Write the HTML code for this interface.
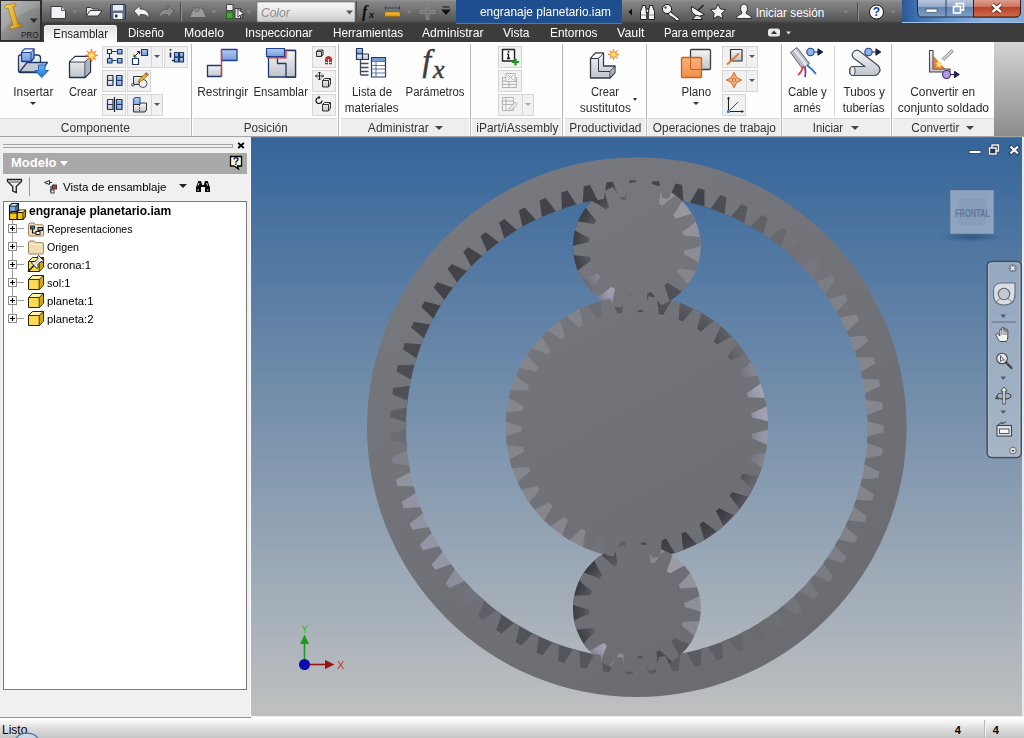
<!DOCTYPE html>
<html lang="es">
<head>
<meta charset="utf-8">
<title>engranaje planetario.iam</title>
<style>
*{box-sizing:border-box;margin:0;padding:0}
html,body{width:1024px;height:738px;overflow:hidden;background:#f0f0f0}
body{position:relative;font-family:"Liberation Sans",sans-serif;font-size:12px;color:#2b2b2b}
.abs{position:absolute}
#titlebar{position:absolute;left:0;top:0;width:1024px;height:24px;background:linear-gradient(#959595 0,#848484 8%,#727272 42%,#656565 60%,#585858 86%,#444 94%,#3b3b3b 100%)}
#tabbar{position:absolute;left:0;top:24px;width:1024px;height:18px;background:#3c3c3c}
#appbtn{position:absolute;left:0;top:0;width:42px;height:41px;background:linear-gradient(#9a9a9a,#7b7b7b 50%,#5c5c5c);border-right:1px solid #2e2e2e;border-bottom:1px solid #2e2e2e}
#doc-title{position:absolute;left:456px;top:0;width:166px;height:24px;background:#1f4e8e;color:#fff;font-size:12px;line-height:24px;padding-left:24px;white-space:nowrap;border-bottom:1px solid #4a78b8}
#winframe{position:absolute;left:902px;top:0;width:122px;height:23px;background:linear-gradient(90deg,#2a5a96,#3f70ad 12%,#6a97cd 40%,#8db3e0 70%,#84abd9);border-bottom:1px solid #9cc0e8}
.tab{position:absolute;top:24px;height:18px;line-height:18px;color:#fff;font-size:12px;white-space:nowrap}
.tab.on{top:25px;height:17px;line-height:16px;background:linear-gradient(#dedede,#f4f4f4 60%,#fefefe);color:#222;border:1px solid #f6f6f6;border-bottom:0;border-radius:3px 3px 0 0;text-align:center}
#ribbon{position:absolute;left:0;top:42px;width:994px;height:94px;background:#fefefe}
#ribbon-r{position:absolute;left:994px;top:42px;width:30px;height:94px;background:linear-gradient(#d3d3d3,#b0b0b0 50%,#8c8c8c)}
.plabel{position:absolute;top:118px;height:18px;background:#eeeeee;border-top:1px solid #d9d9d9;text-align:center;font-size:12px;line-height:17px;padding-top:1px;color:#333;white-space:nowrap}
.psep{position:absolute;top:44px;width:3px;height:92px;background:#b9b9b9;border-left:1px solid #fdfdfd;border-right:1px solid #fdfdfd}
.btxt{position:absolute;margin-top:1px;font-size:12px;line-height:16px;text-align:center;white-space:nowrap;color:#2b2b2b}
.sbtn{position:absolute;width:24px;height:22px;border:1px solid #d6d6d6;background:#f1f1f1}
.dd{position:absolute;width:0;height:0;border-left:3px solid transparent;border-right:3px solid transparent;border-top:3.500px solid #333}
#ribline{position:absolute;left:0;top:136px;width:1024px;height:1px;background:#a4a4a4}
#left{position:absolute;left:0;top:137px;width:251px;height:579px;background:#f0f0f0;border-right:1px solid #fbfbfb}
#viewport{position:absolute;left:251px;top:137px;width:773px;height:579px;background:linear-gradient(#35659a 0%,#bfc0c0 100%);overflow:hidden}
#status{position:absolute;left:0;top:716.500px;width:1024px;height:21.500px;background:linear-gradient(#ffffff,#f4f4f4 20%,#dcdcdc 55%,#c6c6c6);border-top:1px solid #fff}
#tree{position:absolute;left:3px;top:201px;width:244px;height:489px;background:#fff;border:1px solid #7a7a7a}
#modelbar{position:absolute;left:3px;top:153px;width:244px;height:20.500px;background:#a9a9a9;color:#fff;font-weight:bold;font-size:13px;line-height:20px;padding-left:8px}
.trow{position:absolute;left:0;height:18px;line-height:18px;font-size:11.5px;color:#000;white-space:nowrap}
.tc{display:inline-block;transform:scaleX(.98);transform-origin:50% 50%}
.tl{display:inline-block;transform:scaleX(.98);transform-origin:0 50%}
</style>
</head>
<body>
<div id="titlebar"></div>
<div id="tabbar"></div>
<div id="doc-title"><span class="tl" style="transform:scaleX(0.992)">engranaje planetario.iam</span></div>
<div id="winframe"></div>
<div id="appbtn"></div>
<div class="tab on" style="left:44px;width:73px"><span class="tc" style="transform:scaleX(0.954)">Ensamblar</span></div>
<div class="tab" style="left:128px"><span class="tl" style="transform:scaleX(0.964)">Diseño</span></div>
<div class="tab" style="left:184px"><span class="tl" style="transform:scaleX(1.019)">Modelo</span></div>
<div class="tab" style="left:245px"><span class="tl" style="transform:scaleX(0.992)">Inspeccionar</span></div>
<div class="tab" style="left:332.500px"><span class="tl" style="transform:scaleX(0.972)">Herramientas</span></div>
<div class="tab" style="left:422px"><span class="tl" style="transform:scaleX(1.013)">Administrar</span></div>
<div class="tab" style="left:503px"><span class="tl" style="transform:scaleX(1.001)">Vista</span></div>
<div class="tab" style="left:550px"><span class="tl" style="transform:scaleX(0.989)">Entornos</span></div>
<div class="tab" style="left:617px"><span class="tl" style="transform:scaleX(1.039)">Vault</span></div>
<div class="tab" style="left:664px"><span class="tl" style="transform:scaleX(0.945)">Para empezar</span></div>
<div id="ribbon"></div>
<div id="ribbon-r"></div>
<div id="ribline"></div>
<div id="left"></div>
<div id="modelbar">Modelo</div>
<div id="tree"></div>
<div id="status"></div>
<!-- app button contents -->
<svg class="abs" style="left:0;top:0" width="42" height="42" viewBox="0 0 42 42">
<defs><linearGradient id="abg" x1="0" y1="0" x2="1" y2="1"><stop offset="0" stop-color="#b4b4b4"/><stop offset=".5" stop-color="#8c8c8c"/><stop offset="1" stop-color="#666"/></linearGradient>
<linearGradient id="gold" x1="0" y1="0" x2="1" y2="0"><stop offset="0" stop-color="#f7d25a"/><stop offset=".55" stop-color="#eab52c"/><stop offset="1" stop-color="#b77d10"/></linearGradient></defs>
<rect x="0" y="0" width="41" height="41" fill="#2c2c2c"/>
<rect x="1" y="1" width="39" height="39" fill="url(#abg)"/>
<path d="M1 1h39v6q-22 4-39 26z" fill="#fff" opacity=".13"/>
<path d="M4.500 5.500l11-2.500.8 2.800-3.200.9 5 17.500 3.300-.7.800 2.900-11.500 2.700-.8-2.900 3.300-.8-5-17.400-3 .7z" fill="url(#gold)" stroke="#8a5f0c" stroke-width=".5"/>
<path d="M30 18.500h7.500l-3.750 4.500z" fill="#2b2b2b"/>
<text x="21" y="38.300" font-family="Liberation Sans,sans-serif" font-size="9.500" fill="#1c1c1c" textLength="17.500" lengthAdjust="spacingAndGlyphs">PRO</text>
</svg>
<!-- QAT icons -->
<svg class="abs" style="left:42px;top:0" width="414" height="24" viewBox="42 0 414 24">
<defs><linearGradient id="ddg" x1="0" y1="0" x2="0" y2="1"><stop offset="0" stop-color="#f6f6f6"/><stop offset=".45" stop-color="#e8e8e8"/><stop offset="1" stop-color="#c9c9c9"/></linearGradient></defs>
<!-- new -->
<path d="M51 6.500h10.500l4 4v8h-14.500z" fill="#f2f2f6" stroke="#3a3a3a" stroke-width="1"/><path d="M61.500 6.500v4h4" fill="#d8d8de" stroke="#3a3a3a" stroke-width=".8"/>
<path d="M72.500 10.500h5l-2.500 3z" fill="#858585"/>
<!-- open -->
<path d="M86.500 15.500v-8h4.500l1.500 1.500h6v2" fill="#e8e8ec" stroke="#3a3a3a" stroke-width="1"/><path d="M86.500 16l3.500-5.500h12l-4 5.500z" fill="#f4f4f7" stroke="#3a3a3a" stroke-width="1"/>
<!-- save -->
<rect x="110.500" y="4.500" width="15" height="14.500" rx="1" fill="#5d6d86" stroke="#2c3442" stroke-width="1"/><rect x="113" y="5" width="10" height="5.500" fill="#e9edf3"/><rect x="113.500" y="13" width="9" height="6" fill="#f4f4f4"/><rect x="115" y="14.500" width="2.500" height="3" fill="#2c3442"/>
<!-- undo -->
<path d="M134 11l6-5.500v3.500q9-.5 9.500 9.500q-2.500-4.500-9.500-4v3.500z" fill="#f2f2f2" stroke="#3a3a3a" stroke-width=".8" stroke-linejoin="round"/>
<!-- redo -->
<path d="M174 11l-6-5.500v3.500q-9-.5-9.500 9.500q2.500-4.500 9.500-4v3.500z" fill="#8a8a8a" stroke="#555" stroke-width=".8" stroke-linejoin="round"/>
<path d="M180.500 2v20" stroke="#4a4a4a"/><path d="M181.500 2v20" stroke="#8c8c8c"/>
<!-- return (gray) -->
<path d="M189.500 17.500l4-9.500h9l4 9.500z" fill="#9a9a9a" stroke="#5a5a5a"/><path d="M192 7l5 5 6-7" fill="none" stroke="#777" stroke-width="1.500"/>
<path d="M211.500 10.500h5l-2.500 3z" fill="#858585"/>
<!-- update -->
<rect x="226.500" y="4.500" width="6.500" height="6" fill="#e8e8e8" stroke="#444"/><rect x="226.500" y="12" width="6.500" height="6.500" fill="#49a53a" stroke="#2c5f22"/><rect x="235" y="8.500" width="5.500" height="10" fill="#d8d8d8" stroke="#444"/><path d="M238 9l0 8 2-2 1.500 3 1.200-.6-1.500-2.900 2.800-.2z" fill="#fff" stroke="#111" stroke-width=".7"/>
<path d="M246 10.500h5l-2.500 3z" fill="#858585"/>
<!-- color combobox -->
<rect x="257" y="2" width="98" height="20" rx="1" fill="url(#ddg)" stroke="#6a6a6a" stroke-width=".6"/>
<text x="261" y="17" font-family="Liberation Sans,sans-serif" font-size="12" font-style="italic" fill="#8c8c8c">Color</text>
<path d="M346 10.500h7l-3.500 4z" fill="#555"/>
<path d="M356.500 1v22" stroke="#4c4c4c"/>
<!-- fx -->
<text x="362" y="17" font-family="Liberation Serif,serif" font-size="16" font-style="italic" font-weight="bold" fill="#0a0a0a">f</text><text x="369" y="18" font-family="Liberation Serif,serif" font-size="10" font-style="italic" font-weight="bold" fill="#0a0a0a">x</text>
<!-- measure -->
<path d="M385 8h15M385.500 6v4M399.500 6v4" stroke="#36455f" stroke-width="1"/><rect x="385" y="12" width="15" height="4.500" fill="#f0b429" stroke="#8a6a10" stroke-width=".6"/><path d="M387 14.500v2M389 14.500v2M391 14.500v2M393 14.500v2M395 14.500v2M397 14.500v2" stroke="#7a5a10" stroke-width=".5"/>
<path d="M406.500 10.500h5l-2.500 3z" fill="#858585"/>
<path d="M426 4.500h3v6h6v3h-6v6h-3v-6h-6v-3h6z" fill="#777" stroke="#8e8e8e" stroke-width=".8"/>
<path d="M442.500 7h7M442.500 10h7l-3.500 4z" fill="#111" stroke="#111" stroke-width="1.200"/>
</svg>
<!-- right info center -->
<svg class="abs" style="left:622px;top:0" width="278" height="24" viewBox="622 0 278 24">
<path d="M632 8.500v7l-3.500-3.500z" fill="#111"/>
<!-- binoculars -->
<g fill="#f2f2f2" stroke="#1c1c1c" stroke-width="1" stroke-linejoin="round"><path d="M640.500 19.500v-8l1.700-4.500v-1.500h3.300v1.500l1.200 3.500v9z"/><path d="M654.500 19.500v-8l-1.700-4.500v-1.500h-3.300v1.500l-1.200 3.500v9z"/><rect x="646.200" y="9" width="2.600" height="3.500"/><path d="M640.500 15h6.200M648.300 15h6.200" stroke="#777" stroke-width=".8"/></g>
<!-- key -->
<path d="M670 11.500l9.300 7.300-.6 2-2.800-.3-1-1.800-1.600.2-.6-1.800-1.700-.2-2.800-3z" fill="#f2f2f2" stroke="#1c1c1c" stroke-width="1" stroke-linejoin="round"/><circle cx="667" cy="9" r="4.600" fill="#f2f2f2" stroke="#1c1c1c" stroke-width="1"/><circle cx="665.500" cy="7.500" r="1.300" fill="#555"/>
<!-- dish -->
<path d="M696.500 14.500l-4 5h10l-3.500-5z" fill="#e8e8e8" stroke="#1c1c1c" stroke-width="1" stroke-linejoin="round"/><path d="M691.500 6.500q-1 6 3.500 8.500t9.500-.5z" fill="#f4f4f4" stroke="#1c1c1c" stroke-width="1" stroke-linejoin="round"/><path d="M698 10.500l5.500-5.500" stroke="#1c1c1c" stroke-width="1.400"/>
<!-- star -->
<path d="M718 4l2.300 5 5.400.6-4 3.700 1.100 5.400-4.800-2.700-4.800 2.700 1.100-5.400-4-3.700 5.400-.6z" fill="#f4f4f4" stroke="#222" stroke-width=".9" stroke-linejoin="round"/>
<!-- user -->
<path d="M744 4q3.500 0 3.500 4q0 3-1.500 4.500q0 1.500 2 2q3.500 1 3.500 4h-15q0-3 3.500-4q2-.5 2-2q-1.500-1.500-1.500-4.500q0-4 3.500-4z" fill="#f4f4f4" stroke="#222" stroke-width=".9"/>
<text x="755.700" y="17" font-family="Liberation Sans,sans-serif" font-size="12" fill="#fff" textLength="68.500" lengthAdjust="spacingAndGlyphs">Iniciar sesión</text>
<path d="M843.500 10.500h5l-2.500 3z" fill="#858585"/>
<path d="M857.500 3v18" stroke="#4a4a4a"/><path d="M858.500 3v18" stroke="#8c8c8c"/>
<circle cx="876.500" cy="12" r="7" fill="#f6f6f6" stroke="#1a1a1a" stroke-width="1"/>
<text x="876.500" y="16.300" font-family="Liberation Sans,sans-serif" font-size="12" font-weight="bold" fill="#1d3f9e" text-anchor="middle">?</text>
<path d="M891 10.500h5l-2.500 3z" fill="#858585"/>
</svg>
<!-- window buttons -->
<svg class="abs" style="left:900px;top:0" width="124" height="24" viewBox="900 0 124 24">
<defs><linearGradient id="wb" x1="0" y1="0" x2="0" y2="1"><stop offset="0" stop-color="#c3d0e2"/><stop offset=".45" stop-color="#93a9c8"/><stop offset=".5" stop-color="#6584ae"/><stop offset="1" stop-color="#7f9fc8"/></linearGradient>
<linearGradient id="wc" x1="0" y1="0" x2="0" y2="1"><stop offset="0" stop-color="#e3ab9d"/><stop offset=".45" stop-color="#cf735d"/><stop offset=".5" stop-color="#bb422c"/><stop offset="1" stop-color="#cf6c4c"/></linearGradient></defs>
<path d="M917.500 -2h103v14q0 5-5 5h-93q-5 0-5-5z" fill="url(#wb)" stroke="#1e2f4a" stroke-width="1"/>
<path d="M973.500 -2h47v14q0 5-5 5h-42z" fill="url(#wc)" stroke="#3a1a12" stroke-width="1"/>
<path d="M946 0v17" stroke="#2c405e"/>
<rect x="926" y="9" width="11" height="3.500" fill="#fff" stroke="#3a4a62" stroke-width=".7"/>
<rect x="956.500" y="3.500" width="7" height="6.500" fill="none" stroke="#fff" stroke-width="1.600"/><rect x="953.500" y="6.500" width="7" height="6.500" fill="#7f9cc5" stroke="#fff" stroke-width="1.600"/>
<path d="M992.500 4.500l8.500 7.500M1001 4.500l-8.500 7.500" stroke="#3a1a12" stroke-width="4"/><path d="M992.500 4.500l8.500 7.500M1001 4.500l-8.500 7.500" stroke="#fff" stroke-width="2.400"/>
</svg>
<!-- tab-bar end widget -->
<svg class="abs" style="left:766px;top:26px" width="30" height="14" viewBox="0 0 30 14"><rect x="2" y="2.500" width="12" height="8" rx="2.500" fill="#e6e6e6"/><path d="M5 8h6l-3-3.500z" fill="#333"/><path d="M20 5.500h5l-2.500 3z" fill="#ddd"/></svg>
<!-- ribbon panels -->
<div class="plabel" style="left:0;width:190px"><span class="tc" style="transform:scaleX(1.004)">Componente</span></div>
<div class="plabel" style="left:193px;width:145px"><span class="tc" style="transform:scaleX(0.970)">Posición</span></div>
<div class="plabel" style="left:341px;width:128px"><span style="margin-right:14px"><span class="tc" style="transform:scaleX(1.005)">Administrar</span></span><i class="dd" style="left:93.500px;top:7px;border-width:4.500px 4px 0;border-top-color:#444"></i></div>
<div class="plabel" style="left:472px;width:90px"><span class="tc" style="transform:scaleX(0.992)">iPart/iAssembly</span></div>
<div class="plabel" style="left:565px;width:80px"><span class="tc" style="transform:scaleX(0.990)">Productividad</span></div>
<div class="plabel" style="left:648px;width:132px"><span class="tc" style="transform:scaleX(0.986)">Operaciones de trabajo</span></div>
<div class="plabel" style="left:783px;width:107px"><span style="margin-right:16px"><span class="tc" style="transform:scaleX(0.946)">Iniciar</span></span><i class="dd" style="left:68px;top:7px;border-width:4.500px 4px 0;border-top-color:#444"></i></div>
<div class="plabel" style="left:893px;width:101px"><span style="margin-right:16px"><span class="tc" style="transform:scaleX(0.986)">Convertir</span></span><i class="dd" style="left:73px;top:7px;border-width:4.500px 4px 0;border-top-color:#444"></i></div>
<div class="psep" style="left:190px"></div>
<div class="psep" style="left:337px"></div>
<div class="psep" style="left:469px"></div>
<div class="psep" style="left:561px"></div>
<div class="psep" style="left:645px"></div>
<div class="psep" style="left:780px"></div>
<div class="psep" style="left:890px"></div>
<div class="abs" style="left:834px;top:46px;width:1px;height:70px;background:#d6d6d6"></div>

<!-- big button captions -->
<div class="btxt" style="left:3px;top:83px;width:60px"><span class="tc" style="transform:scaleX(0.983)">Insertar</span></div><i class="dd" style="left:30px;top:102px"></i>
<div class="btxt" style="left:53px;top:83px;width:60px"><span class="tc" style="transform:scaleX(0.933)">Crear</span></div>
<div class="btxt" style="left:193px;top:83px;width:60px"><span class="tc" style="transform:scaleX(0.993)">Restringir</span></div>
<div class="btxt" style="left:251px;top:83px;width:60px"><span class="tc" style="transform:scaleX(0.950)">Ensamblar</span></div>
<div class="btxt" style="left:341px;top:83px;width:62px"><span class="tc" style="transform:scaleX(0.952)">Lista de</span><br><span class="tc" style="transform:scaleX(0.972)">materiales</span></div>
<div class="btxt" style="left:400px;top:83px;width:70px"><span class="tc" style="transform:scaleX(0.951)">Parámetros</span></div>
<div class="btxt" style="left:570px;top:83px;width:70px"><span class="tc" style="transform:scaleX(0.933)">Crear</span><br><span class="tc" style="transform:scaleX(1.010)">sustitutos</span></div><i class="dd" style="left:633px;top:98px;border-width:3px 2.5px 0"></i>
<div class="btxt" style="left:661px;top:83px;width:70px"><span class="tc" style="transform:scaleX(0.967)">Plano</span></div><i class="dd" style="left:693px;top:102px"></i>
<div class="btxt" style="left:777px;top:83px;width:60px"><span class="tc" style="transform:scaleX(0.946)">Cable y</span><br><span class="tc" style="transform:scaleX(0.916)">arnés</span></div>
<div class="btxt" style="left:834px;top:83px;width:60px"><span class="tc" style="transform:scaleX(0.978)">Tubos y</span><br><span class="tc" style="transform:scaleX(0.964)">tuberías</span></div>
<div class="btxt" style="left:893px;top:83px;width:100px"><span class="tc" style="transform:scaleX(0.994)">Convertir en</span><br><span class="tc" style="transform:scaleX(1.008)">conjunto soldado</span></div>

<!-- small buttons -->
<div class="sbtn" style="left:102px;top:46px;width:24px"></div>
<div class="sbtn" style="left:127px;top:46px;width:36px"></div><div class="abs" style="left:151px;top:47px;width:1px;height:20px;background:#d6d6d6"></div><i class="dd" style="left:154px;top:55px;border-width:3.500px 3px 0;border-top-color:#555"></i>
<div class="sbtn" style="left:164px;top:46px;width:24px"></div>
<div class="sbtn" style="left:102px;top:70px;width:24px"></div>
<div class="sbtn" style="left:127px;top:70px;width:24px"></div>
<div class="sbtn" style="left:102px;top:94px;width:24px"></div>
<div class="sbtn" style="left:127px;top:94px;width:36px"></div><div class="abs" style="left:151px;top:95px;width:1px;height:20px;background:#d6d6d6"></div><i class="dd" style="left:154px;top:103px;border-width:3.500px 3px 0;border-top-color:#555"></i>
<div class="sbtn" style="left:312px;top:46px;width:24px"></div>
<div class="sbtn" style="left:312px;top:70px;width:24px"></div>
<div class="sbtn" style="left:312px;top:94px;width:24px"></div>
<div class="sbtn" style="left:498px;top:46px;width:24px"></div>
<div class="sbtn" style="left:498px;top:70px;width:24px"></div>
<div class="sbtn" style="left:498px;top:94px;width:36px"></div><div class="abs" style="left:522px;top:95px;width:1px;height:20px;background:#d6d6d6"></div><i class="dd" style="left:525px;top:103px;border-width:3.500px 3px 0;border-top-color:#aaa"></i>
<div class="sbtn" style="left:722px;top:46px;width:36px"></div><div class="abs" style="left:746px;top:47px;width:1px;height:20px;background:#d6d6d6"></div><i class="dd" style="left:749px;top:55px;border-width:3.500px 3px 0;border-top-color:#555"></i>
<div class="sbtn" style="left:722px;top:70px;width:36px"></div><div class="abs" style="left:746px;top:71px;width:1px;height:20px;background:#d6d6d6"></div><i class="dd" style="left:749px;top:79px;border-width:3.500px 3px 0;border-top-color:#555"></i>
<div class="sbtn" style="left:722px;top:94px;width:24px"></div>
<svg class="abs" style="left:0;top:42px" width="994" height="78" viewBox="0 42 994 78">
<defs>
<linearGradient id="gb" x1="0" y1="0" x2="0" y2="1"><stop offset="0" stop-color="#b5cdf0"/><stop offset="1" stop-color="#6f9bdc"/></linearGradient>
<linearGradient id="gg" x1="0" y1="0" x2="0" y2="1"><stop offset="0" stop-color="#f6f6f7"/><stop offset="1" stop-color="#bfc3ca"/></linearGradient>
<linearGradient id="go" x1="0" y1="0" x2="0" y2="1"><stop offset="0" stop-color="#fbb27c"/><stop offset="1" stop-color="#f3904a"/></linearGradient>
<linearGradient id="gbl" x1="0" y1="0" x2="0" y2="1"><stop offset="0" stop-color="#6db3f5"/><stop offset="1" stop-color="#1f6fd6"/></linearGradient>
<radialGradient id="gst"><stop offset="0" stop-color="#fff7a0"/><stop offset=".45" stop-color="#ffc93a"/><stop offset="1" stop-color="#e8601a"/></radialGradient>
<g id="star"><path d="M0-6.500L1.300-2.600 4.600-4.600 2.600-1.300 6.500 0 2.600 1.300 4.600 4.600 1.300 2.600 0 6.500-1.300 2.600-4.600 4.600-2.600 1.300-6.500 0-2.600-1.300-4.600-4.600-1.300-2.600z" fill="url(#gst)" stroke="#e0641c" stroke-width=".5"/></g>
</defs>
<g stroke-linejoin="round">
<!-- Insertar -->
<path d="M18.500 57q0-2 2-2h17q3 0 3 3v12.500q0 2-2 2h-18q-2 0-2-2z" fill="url(#gg)" stroke="#1f3864" stroke-width="1.300"/>
<path d="M19.500 72l7.500-9.500h20.500l-6.500 9.500z" fill="#c3c7cf" stroke="#1f3864" stroke-width="1.300"/>
<path d="M21.500 52.500l3-3.500h9.500v9l-3 3.500h-9.500z" fill="url(#gb)" stroke="#1f3f8f" stroke-width="1.300"/><path d="M21.500 52.500h9.500l3-3.500M31 52.500v9" fill="none" stroke="#1f3f8f" stroke-width="1"/><path d="M22.300 52l2.400-2.500h8.300l-2.300 2.500z" fill="#e3ecfa"/>
<path d="M38.500 65h6.500v5.500h3.500l-6.700 7-6.800-7h3.500z" fill="url(#gbl)" stroke="#1a5cc0" stroke-width=".9"/>
<!-- Crear -->
<path d="M69.500 62l5.500-5.500h15.500v15.500l-5.500 5.500h-15.500z" fill="url(#gg)" stroke="#1f2f4f" stroke-width="1.300"/><path d="M69.500 62h15.500l5.500-5.500M85 62v15.500" fill="none" stroke="#1f2f4f" stroke-width="1"/><path d="M70.500 61.300l4.800-4.200h13.700l-4.500 4.200z" fill="#fdfdfd"/><path d="M85.700 62.300l4.200-4.300v13.700l-4.200 4.300z" fill="#aeb3bd"/>
<use href="#star" x="91.500" y="55.500"/>
<!-- small component icons -->
<g fill="url(#gb)" stroke="#1f3864" stroke-width="1.200">
<path d="M111.500 51.500h5M111.500 60.500h5M109.500 54v4" fill="none"/>
<rect x="107.500" y="49.500" width="4" height="4" fill="#fff"/><rect x="117.500" y="49.500" width="4.500" height="4.500"/><rect x="107.500" y="58.500" width="4.500" height="4.500"/><rect x="117.500" y="58.500" width="4.500" height="4.500"/>
<rect x="141.500" y="49.500" width="6" height="6"/><rect x="132.500" y="58.500" width="6" height="6" fill="#fff"/>
<path d="M134 57l5.500-5.500M134 54.500v2.500h2.500M137 51.500h2.500v2.500" fill="none" stroke="#222" stroke-width="1"/>
<rect x="174.500" y="52.500" width="4" height="4.500"/><rect x="179.500" y="52.500" width="4" height="4.500"/><rect x="174.500" y="57.500" width="4" height="4.500"/><rect x="179.500" y="57.500" width="4" height="4.500"/>
<path d="M170.500 52.500v5M172 60.500h2" fill="none" stroke="#14224a" stroke-width="1.600"/><rect x="169.700" y="49" width="1.600" height="1.600" fill="#14224a" stroke="none"/>
<!-- row2 -->
<rect x="107.500" y="75.500" width="5.500" height="5" fill="url(#gg)"/><rect x="107.500" y="80.500" width="5.500" height="5" fill="url(#gg)"/><rect x="116.500" y="75.500" width="5.500" height="5"/><rect x="116.500" y="80.500" width="5.500" height="5"/>
<path d="M133.500 76.500h9v8h-9z" fill="url(#gg)" stroke="#333" stroke-width="1"/><circle cx="143" cy="83.500" r="4" fill="#f2f2f2" stroke="#555" stroke-width="1"/><rect x="131.800" y="83.800" width="2.200" height="2.200" fill="#fff" stroke="#333" stroke-width=".8"/>
<path d="M138.500 82l1-3 6.500-6 2 2-6.500 6z" fill="#f0b429" stroke="#7a5a10" stroke-width=".7"/><path d="M145 73.500l1.500-1 2 2-1 1.500z" fill="#e27b58" stroke="#7a3a20" stroke-width=".5"/>
<!-- row3 -->
<path d="M107.500 99.500h5.500v5h-5.500zM107.500 104.500h5.500v5h-5.500z" fill="url(#gg)"/><path d="M114.500 97v15" stroke="#222" stroke-width="1.200"/><rect x="116.500" y="99.500" width="5.500" height="5"/><rect x="116.500" y="104.500" width="5.500" height="5"/>
<path d="M133.500 99.500l1.500-2h5l0 7.500-1.500 2h-5z" stroke="#2a5fb0"/><path d="M133.500 104.500h6.500l1-1.500h5.500v7l-1.500 2h-11.500z" fill="url(#gg)" stroke="#333" stroke-width="1"/><path d="M139.500 104.500v7" stroke="#333" stroke-dasharray="1.500 1" stroke-width=".9" fill="none"/>
</g>
<!-- Restringir -->
<rect x="207.500" y="65.500" width="14" height="11" fill="url(#gg)" stroke="#1f3864" stroke-width="1.300"/>
<rect x="221.500" y="49.500" width="15.500" height="11" fill="url(#gb)" stroke="#1f3f8f" stroke-width="1.300"/>
<path d="M221.500 49v28" stroke="#e03a3a" stroke-width="1.400"/>
<!-- Ensamblar -->
<path d="M268.500 50.500h27v26.500h-9.500v-13.500h-8.500v-7.500h-9z" fill="url(#gg)" stroke="#1f3864" stroke-width="1.300"/><path d="M268.500 50.500h27v26.500h-27z" fill="url(#gg)" stroke="#1f3864" stroke-width="1.300"/><path d="M277.500 56v7.500h8.500v13.500" fill="none" stroke="#1f3864" stroke-width="1.300"/>
<path d="M267 57.700h19v-8" fill="none" stroke="#e03a3a" stroke-width="1.500"/>
<rect x="266.500" y="48.500" width="18" height="8" fill="url(#gb)" stroke="#1f3f8f" stroke-width="1.200"/>
<!-- posicion small -->
<g stroke="#333" stroke-width="1" fill="url(#gg)">
<path d="M316.500 51.500l1.500-1.500h5v5l-1.500 1.500h-5zM316.500 51.500h5l1.500-1.500M321.500 51.500v5"/>
<path d="M325.500 64v-4.500q0-3 3-3t3 3v4.500h-2v-4.500q0-1-1-1t-1 1v4.500z" fill="#e02525" stroke="#8a1010" stroke-width=".7"/><path d="M325.500 62.500h2M329.500 62.500h2" stroke="#fff" stroke-width="1.200"/>
<path d="M322.500 80.500l2-2h6v6l-2 2.500h-6zM322.500 80.500h6l2-2M328.500 80.500v6.500"/>
<path d="M319.500 72v8M315.500 76h8M319.500 72l-1.500 1.500M319.500 72l1.500 1.500M319.500 80l-1.500-1.500M319.500 80l1.500-1.500M315.500 76l1.500-1.500M315.500 76l1.500 1.500M323.500 76l-1.500-1.500M323.500 76l-1.500 1.500" fill="none" stroke="#111" stroke-width=".9"/>
<path d="M322.500 104.500l2-2h6v6l-2 2.500h-6zM322.500 104.500h6l2-2M328.500 104.500v6.500"/>
<path d="M322 100.500a3 3 0 1 1-3-3" fill="none" stroke="#111" stroke-width="1.100"/><path d="M318.500 95.500l2 2-2 2z" fill="#111" stroke="none"/>
</g>
<!-- Lista de materiales -->
<g stroke="#1f3864" stroke-width="1.200">
<rect x="356.500" y="48.500" width="6" height="5.500" fill="url(#gb)"/><rect x="356.500" y="54" width="6" height="5.500" fill="url(#gg)"/><rect x="362.500" y="54" width="6" height="5.500" fill="url(#gg)"/>
<path d="M360.500 60v15M360.500 63.500h8M360.500 67.500h8M360.500 71.500h8M360.500 75h8" fill="none" stroke="#3a4a62" stroke-width="1.300"/>
<rect x="371.500" y="57.500" width="14" height="19.500" fill="#fff"/><rect x="372" y="58" width="13" height="3" fill="#7a9bd0" stroke="none"/>
<path d="M371.500 61.500h14M371.500 65.500h14M371.500 69h14M371.500 73h14M376 61.500v15.500" fill="none" stroke="#4a68a0" stroke-width=".9"/>
</g>
<!-- fx -->
<text x="422.500" y="71" font-family="Liberation Serif,serif" font-size="31" font-style="italic" fill="#3c3c3c" stroke="#3c3c3c" stroke-width=".55">f</text>
<text x="433" y="77.500" font-family="Liberation Serif,serif" font-size="26" font-style="italic" fill="#3c3c3c" stroke="#3c3c3c" stroke-width=".5">x</text>
<!-- iPart small -->
<rect x="502.500" y="49.500" width="12" height="11.500" fill="#fff" stroke="#222" stroke-width="1.400"/><path d="M508.500 54v4.500M507 58.500h3.200M507.200 54h1.300" stroke="#111" stroke-width="1.400" fill="none"/><rect x="507.700" y="51" width="1.600" height="1.600" fill="#111"/>
<path d="M512 62h7M515.500 58.500v7" stroke="#1e9a1e" stroke-width="2.200"/>
<g stroke="#b4b4b4" stroke-width="1" fill="#f4f4f4">
<rect x="502.500" y="77.500" width="14" height="10"/><path d="M502.500 81h14M502.500 84.500h14M509 81v6.500" fill="none"/><rect x="506" y="73.500" width="9" height="8"/><path d="M508 75l5 5M513 75l-5 5" fill="none"/>
<rect x="502.500" y="97.500" width="11" height="13"/><path d="M502.500 101h11M502.500 104.500h11M506 97.500v13" fill="none"/><path d="M508.500 111l1-3 6-6 2 2-6 6z" fill="#eee"/>
</g>
<!-- Crear sustitutos -->
<path d="M590.500 58.500l5-5.500h8v13h11.500v6.500l-5 5.500h-19.500z" fill="url(#gg)" stroke="#333b4a" stroke-width="1.300"/><path d="M590.500 58.500h8l5-5.500M598.500 58.500v13h11.500l5-5.500M610 71.500v6.500" fill="none" stroke="#333b4a" stroke-width="1"/><path d="M591.500 57.800l4.300-4h6.600l-4.200 4z" fill="#fff"/><path d="M610.700 72l3.800-4.300v4.600l-3.800 4.300z" fill="#a9aeb8"/>
<use href="#star" x="613.500" y="54.500" transform="translate(613.500 54.500) scale(.85) translate(-613.500 -54.500)"/>
<!-- Plano -->
<rect x="690.500" y="49.500" width="20" height="20" rx="1" fill="url(#gg)" stroke="#3a3a3a" stroke-width="1.300"/>
<rect x="681.500" y="57.500" width="20" height="20" rx="1" fill="url(#go)" stroke="#c2621e" stroke-width="1.300"/><path d="M690.500 58v11.500h11" fill="none" stroke="#c2621e" stroke-width="1"/>
<!-- ops small -->
<rect x="730.500" y="49.500" width="11.500" height="11.500" fill="url(#gg)" stroke="#333" stroke-width="1.200"/><path d="M727 64.500l12-11" stroke="#d9763a" stroke-width="1.800"/>
<path d="M734 72.500l2.500 5 5 2.500-5 2.500-2.500 5-2.500-5-5-2.500 5-2.500z" fill="#fbb27c" stroke="#d9763a" stroke-width="1.200"/><circle cx="734" cy="80" r="1.600" fill="#f7d0b0" stroke="#c2621e" stroke-width=".9"/>
<path d="M728.500 98v13.500h14" fill="none" stroke="#222" stroke-width="1.100"/><path d="M728.500 96.500l-1.500 2.500h3zM744 111.500l-2.500-1.500v3z" fill="#222"/><path d="M729 111l9-9" stroke="#444" stroke-width="1"/><rect x="727" y="110" width="3" height="3" fill="#3a8ae0"/>
<!-- Cable y arnés -->
<path d="M790.500 52.500l6.500-5 12.500 16-7 5z" fill="#b9bec8" stroke="#59616f" stroke-width="1"/><path d="M794.500 50l12 15.500" stroke="#eef0f4" stroke-width="2.200" opacity=".9"/>
<path d="M803 66q-1 6-5 9" fill="none" stroke="#e04545" stroke-width="1.800"/><path d="M805 67q1 6 0 10" fill="none" stroke="#6a3fb0" stroke-width="1.800"/><path d="M807 65q5 4 9 9" fill="none" stroke="#2a6fd0" stroke-width="1.800"/>
<circle cx="810.500" cy="52" r="3.700" fill="#8fb4e6" stroke="#1f3f8f" stroke-width="1.100"/><path d="M814.500 52h4.500M818 49l4.500 3-4.500 3z" fill="#14224a" stroke="#14224a" stroke-width="1.200"/>
<!-- Tubos -->
<path d="M853 52.500q3-4 7-1l18 14q4 4 0 8.500q-1.500 1.500-4 1.500h-21q-3.500-.5-3.500-4.500t3.500-4.500h12l-11-8q-3-3-1-6z" fill="url(#gg)" stroke="#444c5a" stroke-width="1.200"/><ellipse cx="852.500" cy="71" rx="2.600" ry="4.300" fill="#e9ebef" stroke="#444c5a" stroke-width="1"/>
<circle cx="868.500" cy="52" r="3.700" fill="#8fb4e6" stroke="#1f3f8f" stroke-width="1.100"/><path d="M872.500 52h4.500M876 49l4.500 3-4.500 3z" fill="#14224a" stroke="#14224a" stroke-width="1.200"/>
<!-- Convertir -->
<path d="M929.500 50.500h3.500v18.500h17v3h-20.500z" fill="url(#gg)" stroke="#444" stroke-width="1.100"/>
<path d="M933.500 56.500l11 12h-11z" fill="#f0783c" stroke="#c2501e" stroke-width=".6"/><path d="M938 60l1 2.500 2.500-1-1 2.500 2.500 1-2.500 1-.5 2.500-1.500-2-2.500.5 1-2.500-2-1.500 2.500-.5z" fill="#ffe27a"/>
<path d="M942 58.500l9.500-9 2 2-9.500 9z" fill="#c9cdd4" stroke="#777f8c" stroke-width=".8"/>
<circle cx="946.500" cy="74.500" r="4" fill="#b59ae0" stroke="#3f2f7a" stroke-width="1.100"/><path d="M950.500 74.500h5M954.500 71.500l4.500 3-4.500 3z" fill="#2a1f5a" stroke="#2a1f5a" stroke-width="1.200"/>
</g>
</svg>
<!-- browser panel -->
<div class="abs" style="left:3px;top:144px;width:230px;height:4px;border-top:1px solid #a4a4a4;border-bottom:1px solid #a4a4a4;border-right:1px solid #a4a4a4"></div>
<svg class="abs" style="left:237px;top:142px" width="8" height="7" viewBox="0 0 8 7"><path d="M1.2 1L6.8 6M6.800 1L1.2 6" stroke="#000" stroke-width="1.700"/></svg>
<i class="dd" style="left:60px;top:161px;border-width:5px 4.5px 0;border-top-color:#fff"></i>
<svg class="abs" style="left:229px;top:155px" width="14" height="15" viewBox="0 0 14 15"><path d="M1.5 1.5h11v9.5h-4l1 3-4.5-3h-3.5z" fill="#ffffd8" stroke="#000" stroke-width="1.3"/><text x="7" y="9.6" font-family="Liberation Sans,sans-serif" font-size="10.500" font-weight="bold" text-anchor="middle" fill="#0c0c5c">?</text></svg>
<!-- toolbar -->
<svg class="abs" style="left:6px;top:178px" width="18" height="17" viewBox="0 0 18 17"><path d="M1.5 1.5h14v2l-5.2 5v6l-3.6-1.5v-4.5l-5.2-5z" fill="#e8e8e8" stroke="#222" stroke-width="1.3"/><path d="M3 4h11" stroke="#555" stroke-width="1"/></svg>
<div class="abs" style="left:29px;top:177px;width:1px;height:19px;background:#9a9a9a"></div>
<svg class="abs" style="left:42px;top:178px" width="18" height="17" viewBox="0 0 18 17"><path d="M7.5 2.5l-5 2 5 2z" fill="#fff" stroke="#222" stroke-width="1"/><path d="M7 4.5h3" stroke="#222"/><path d="M9 8v6h2" fill="none" stroke="#222" stroke-width="1.2"/><rect x="10.5" y="7" width="4" height="4" fill="#c0392b" stroke="#222" stroke-width=".8"/><rect x="9" y="12" width="3" height="3" fill="#fff" stroke="#222" stroke-width=".8"/></svg>
<div class="abs" style="left:62.500px;top:179px;font-size:11.500px;line-height:16px;color:#000;white-space:nowrap"><span class="tl" style="transform:scaleX(1.001)">Vista de ensamblaje</span></div>
<i class="dd" style="left:179px;top:184px;border-width:4px 4px 0;border-top-color:#222"></i>
<svg class="abs" style="left:195px;top:179px" width="16" height="14" viewBox="0 0 16 14"><path d="M1 13v-4.500l2.300-6.500h2.700l1.200 4h1.600l1.200-4h2.700l2.300 6.500v4.500h-5v-5h-4v5z" fill="#0a0a0a"/><path d="M3 10.500v1.500M12.800 10.500v1.500M4 4l-.8 2.500M11.700 4l.8 2.500" stroke="#fff" stroke-width=".9"/></svg>
<!-- tree -->
<div class="abs" style="left:12px;top:220px;width:1px;height:99px;background:#9c9c9c"></div>
<svg class="abs" style="left:7px;top:202px" width="20" height="19" viewBox="7 202 20 19" stroke-linejoin="round"><path d="M9.500 206l2.500-2.500h6.500v6.500l-2.500 2.500h-6.500z" fill="#7fa6dc" stroke="#111" stroke-width="1.100"/><path d="M9.500 206h6.500l2.500-2.500M16 206v6.500" fill="none" stroke="#111" stroke-width="1"/><path d="M10.300 205.500l2-1.600h5l-1.800 1.600z" fill="#e8f0fb"/><path d="M16.600 206.300l1.500-1.500v4.800l-1.500 1.600z" fill="#3e68a8"/><path d="M17 212.500l2.500-2.500h6v6.500l-2.500 3h-6z" fill="#f5c518" stroke="#111" stroke-width="1.100"/><path d="M17 212.500h6l2.500-2.500M23 212.500v7" fill="none" stroke="#111" stroke-width="1"/><path d="M17.800 212l1.900-1.500h4.600l-1.700 1.500z" fill="#fff3a8"/><path d="M23.600 212.800l1.500-1.600v4.600l-1.500 1.800z" fill="#c99700"/><path d="M9.500 213l2-1.500h5.500v8h-7.500z" fill="#f5c518" stroke="#111" stroke-width="1.100"/><path d="M9.500 213h7.500" fill="none" stroke="#111" stroke-width="1"/></svg>
<div class="abs" style="left:28.500px;top:203px;font-size:12px;font-weight:bold;line-height:16px;color:#000;white-space:nowrap"><span class="tl" style="transform:scaleX(1.006)">engranaje planetario.iam</span></div>
<svg class="abs" style="left:8px;top:224px" width="17" height="9" viewBox="0 0 17 9"><rect x=".5" y=".5" width="8" height="8" fill="#fff" stroke="#8c8c8c"/><path d="M2 4.500h5M4.500 2v5" stroke="#000" stroke-width="1.200"/><path d="M9 4.500h7" stroke="#9c9c9c"/></svg>
<svg class="abs" style="left:27px;top:221px" width="18" height="16" viewBox="0 0 18 16"><path d="M1.500 3.800q0-1.800 1.800-1.800h3.700l1.500 1.700h6.500q1.500 0 1.500 1.500v8.600q0 1.200-1.200 1.200h-12.600q-1.200 0-1.200-1.200z" fill="#f2dcb2" stroke="#9a845e" stroke-width="1"/><path d="M2.500 5.200h13" stroke="#fbf1da" stroke-width="1"/><rect x="3.500" y="5" width="4" height="3" fill="#3b6fc0" stroke="#111" stroke-width=".8"/><path d="M5.500 8v4h3.500" fill="none" stroke="#111" stroke-width="1.100"/><rect x="9" y="10.500" width="4" height="3" fill="#fff" stroke="#111" stroke-width=".9"/><rect x="11" y="6.500" width="4.500" height="3" fill="#8fa6c8" stroke="#111" stroke-width=".9"/></svg>
<div class="abs" style="left:46.500px;top:221px;font-size:11px;line-height:16px;color:#000;white-space:nowrap"><span class="tl" style="transform:scaleX(0.965)">Representaciones</span></div>
<svg class="abs" style="left:8px;top:242px" width="17" height="9" viewBox="0 0 17 9"><rect x=".5" y=".5" width="8" height="8" fill="#fff" stroke="#8c8c8c"/><path d="M2 4.500h5M4.500 2v5" stroke="#000" stroke-width="1.200"/><path d="M9 4.500h7" stroke="#9c9c9c"/></svg>
<svg class="abs" style="left:27px;top:239px" width="18" height="16" viewBox="0 0 18 16"><path d="M1.500 3.800q0-1.800 1.800-1.800h3.700l1.500 1.700h6.500q1.500 0 1.500 1.500v8.600q0 1.200-1.200 1.200h-12.600q-1.200 0-1.200-1.200z" fill="#f2dcb2" stroke="#9a845e" stroke-width="1"/><path d="M2.500 5.200h13" stroke="#fbf1da" stroke-width="1"/></svg>
<div class="abs" style="left:46.500px;top:239px;font-size:11px;line-height:16px;color:#000;white-space:nowrap"><span class="tl" style="transform:scaleX(0.969)">Origen</span></div>
<svg class="abs" style="left:8px;top:260px" width="17" height="9" viewBox="0 0 17 9"><rect x=".5" y=".5" width="8" height="8" fill="#fff" stroke="#8c8c8c"/><path d="M2 4.500h5M4.500 2v5" stroke="#000" stroke-width="1.200"/><path d="M9 4.500h7" stroke="#9c9c9c"/></svg>
<svg class="abs" style="left:27px;top:256px" width="18" height="17" viewBox="0 0 18 17" stroke-linejoin="round"><path d="M1.500 5.500l4-4h11v9.500l-4 4.500h-11z" fill="#f7d038" stroke="#2a2200" stroke-width="1"/><path d="M2.200 6.200h9.600v8.600h-9.600z" fill="#fadb55"/><path d="M2.500 5l3.300-3h9.400l-3.100 3z" fill="#fff5b0"/><path d="M12.700 5.800l3.200-3.400v8.300l-3.200 3.700z" fill="#d9a400"/><path d="M1.500 5.500h10.700l4.300-4M12.200 5.500v10" fill="none" stroke="#2a2200" stroke-width=".9"/></svg>
<svg class="abs" style="left:27px;top:255px" width="18" height="18" viewBox="0 0 18 18" stroke-linejoin="round"><path d="M1 16.500l6-6" stroke="#111" stroke-width="1.200"/><path d="M4.500 8l5.500 5.500 1.500-1.800-.8-1.900 3.300-3.300 1.800.5 1.200-1.200-5.300-5.300-1.200 1.200.5 1.800-3.300 3.300-1.900-.6z" fill="#f6f6f6" stroke="#111" stroke-width="1"/><path d="M8 9.500l4-4" stroke="#aaa" stroke-width="1"/></svg>
<div class="abs" style="left:46.500px;top:257px;font-size:11px;line-height:16px;color:#000;white-space:nowrap"><span class="tl" style="transform:scaleX(1.028)">corona:1</span></div>
<svg class="abs" style="left:8px;top:278px" width="17" height="9" viewBox="0 0 17 9"><rect x=".5" y=".5" width="8" height="8" fill="#fff" stroke="#8c8c8c"/><path d="M2 4.500h5M4.500 2v5" stroke="#000" stroke-width="1.200"/><path d="M9 4.500h7" stroke="#9c9c9c"/></svg>
<svg class="abs" style="left:27px;top:274px" width="18" height="17" viewBox="0 0 18 17" stroke-linejoin="round"><path d="M1.500 5.500l4-4h11v9.500l-4 4.500h-11z" fill="#f7d038" stroke="#2a2200" stroke-width="1"/><path d="M2.200 6.200h9.600v8.600h-9.600z" fill="#fadb55"/><path d="M2.500 5l3.300-3h9.400l-3.100 3z" fill="#fff5b0"/><path d="M12.700 5.800l3.200-3.400v8.300l-3.200 3.700z" fill="#d9a400"/><path d="M1.500 5.500h10.700l4.300-4M12.200 5.500v10" fill="none" stroke="#2a2200" stroke-width=".9"/></svg>
<div class="abs" style="left:46.500px;top:275px;font-size:11px;line-height:16px;color:#000;white-space:nowrap"><span class="tl" style="transform:scaleX(1.011)">sol:1</span></div>
<svg class="abs" style="left:8px;top:296px" width="17" height="9" viewBox="0 0 17 9"><rect x=".5" y=".5" width="8" height="8" fill="#fff" stroke="#8c8c8c"/><path d="M2 4.500h5M4.500 2v5" stroke="#000" stroke-width="1.200"/><path d="M9 4.500h7" stroke="#9c9c9c"/></svg>
<svg class="abs" style="left:27px;top:292px" width="18" height="17" viewBox="0 0 18 17" stroke-linejoin="round"><path d="M1.500 5.500l4-4h11v9.500l-4 4.500h-11z" fill="#f7d038" stroke="#2a2200" stroke-width="1"/><path d="M2.200 6.200h9.600v8.600h-9.600z" fill="#fadb55"/><path d="M2.500 5l3.300-3h9.400l-3.100 3z" fill="#fff5b0"/><path d="M12.700 5.800l3.200-3.400v8.300l-3.200 3.700z" fill="#d9a400"/><path d="M1.500 5.500h10.700l4.300-4M12.200 5.500v10" fill="none" stroke="#2a2200" stroke-width=".9"/></svg>
<div class="abs" style="left:46.500px;top:293px;font-size:11px;line-height:16px;color:#000;white-space:nowrap"><span class="tl" style="transform:scaleX(1.027)">planeta:1</span></div>
<svg class="abs" style="left:8px;top:314px" width="17" height="9" viewBox="0 0 17 9"><rect x=".5" y=".5" width="8" height="8" fill="#fff" stroke="#8c8c8c"/><path d="M2 4.500h5M4.500 2v5" stroke="#000" stroke-width="1.200"/><path d="M9 4.500h7" stroke="#9c9c9c"/></svg>
<svg class="abs" style="left:27px;top:310px" width="18" height="17" viewBox="0 0 18 17" stroke-linejoin="round"><path d="M1.500 5.500l4-4h11v9.500l-4 4.500h-11z" fill="#f7d038" stroke="#2a2200" stroke-width="1"/><path d="M2.200 6.200h9.600v8.600h-9.600z" fill="#fadb55"/><path d="M2.500 5l3.300-3h9.400l-3.100 3z" fill="#fff5b0"/><path d="M12.700 5.800l3.200-3.400v8.300l-3.200 3.700z" fill="#d9a400"/><path d="M1.500 5.500h10.700l4.300-4M12.200 5.500v10" fill="none" stroke="#2a2200" stroke-width=".9"/></svg>
<div class="abs" style="left:46.500px;top:311px;font-size:11px;line-height:16px;color:#000;white-space:nowrap"><span class="tl" style="transform:scaleX(1.027)">planeta:2</span></div>
<div id="viewport"><div class="abs" style="left:0;top:0;width:773px;height:1px;background:#5f6c7e"></div>
<svg class="abs" style="left:0;top:0" width="773" height="579" viewBox="251 137 773 579">
<defs>
<linearGradient id="gface" gradientUnits="userSpaceOnUse" x1="500" y1="160" x2="790" y2="700">
<stop offset="0" stop-color="#78797e"/><stop offset="1" stop-color="#6a6b70"/>
</linearGradient>
<radialGradient id="shad"><stop offset="0" stop-color="#1d3c68" stop-opacity=".55"/><stop offset="1" stop-color="#1d3c68" stop-opacity="0"/></radialGradient>
<filter id="blur1" x="-20%" y="-20%" width="140%" height="140%"><feGaussianBlur stdDeviation="0.6"/></filter>
</defs>
<g shape-rendering="geometricPrecision">
<polygon points="643.9,179.1 649.9,179.4 656.0,179.8 662.0,180.3 668.0,181.0 665.8,198.3 660.2,197.7 654.6,197.2 649.0,196.8 643.4,196.6" fill="#424348"/>
<polygon points="667.1,180.9 673.1,181.7 679.1,182.6 685.0,183.8 691.0,185.0 687.2,202.1 681.6,200.9 676.1,199.9 670.5,199.0 664.9,198.2" fill="#424348"/>
<polygon points="690.0,184.8 695.9,186.2 701.8,187.7 707.6,189.3 713.4,191.1 708.0,207.8 702.6,206.1 697.2,204.5 691.7,203.1 686.3,201.9" fill="#424348"/>
<polygon points="712.5,190.8 718.2,192.8 723.9,194.8 729.6,197.0 735.2,199.4 728.3,215.4 723.1,213.2 717.8,211.2 712.5,209.3 707.1,207.5" fill="#4d4e53"/>
<polygon points="734.3,199.0 739.8,201.4 745.3,204.0 750.7,206.7 756.1,209.6 747.7,224.9 742.7,222.2 737.7,219.7 732.6,217.3 727.4,215.0" fill="#57585e"/>
<polygon points="755.2,209.1 760.5,212.1 765.7,215.1 770.9,218.4 776.0,221.7 766.2,236.2 761.4,233.1 756.7,230.1 751.8,227.2 746.9,224.5" fill="#616268"/>
<polygon points="775.1,221.1 780.1,224.6 785.0,228.1 789.9,231.8 794.6,235.6 783.5,249.1 779.1,245.6 774.6,242.2 770.0,238.9 765.4,235.7" fill="#68696f"/>
<polygon points="793.8,235.0 798.5,238.9 803.0,242.9 807.5,247.0 811.8,251.2 799.5,263.6 795.5,259.7 791.3,255.9 787.1,252.2 782.8,248.5" fill="#707177"/>
<polygon points="811.1,250.5 815.4,254.9 819.6,259.3 823.6,263.8 827.6,268.4 814.1,279.6 810.5,275.3 806.7,271.1 802.8,267.0 798.9,263.0" fill="#76777e"/>
<polygon points="826.9,267.7 830.8,272.3 834.5,277.1 838.1,282.0 841.6,287.0 827.2,296.8 823.9,292.2 820.6,287.7 817.1,283.3 813.5,278.9" fill="#7c7d83"/>
<polygon points="841.0,286.2 844.4,291.2 847.7,296.3 850.8,301.5 853.8,306.8 838.5,315.2 835.7,310.3 832.8,305.5 829.8,300.8 826.6,296.1" fill="#818289"/>
<polygon points="853.3,305.9 856.2,311.2 859.0,316.6 861.6,322.1 864.2,327.6 848.1,334.6 845.8,329.5 843.4,324.4 840.8,319.4 838.1,314.4" fill="#85868d"/>
<polygon points="863.8,326.7 866.1,332.3 868.4,337.9 870.5,343.6 872.5,349.3 855.9,354.8 854.1,349.5 852.1,344.2 850.0,339.0 847.8,333.8" fill="#85868d"/>
<polygon points="872.2,348.4 874.0,354.2 875.7,360.0 877.3,365.9 878.7,371.8 861.7,375.7 860.4,370.2 858.9,364.7 857.3,359.3 855.6,354.0" fill="#85868d"/>
<polygon points="878.5,370.8 879.8,376.7 881.0,382.7 882.0,388.7 882.9,394.7 865.6,397.0 864.7,391.4 863.8,385.8 862.7,380.3 861.5,374.8" fill="#86878e"/>
<polygon points="882.7,393.7 883.5,399.7 884.1,405.7 884.5,411.8 884.8,417.8 867.4,418.5 867.1,412.9 866.7,407.2 866.1,401.6 865.4,396.0" fill="#86878e"/>
<polygon points="884.8,416.9 885.0,422.9 885.0,429.0 884.9,435.0 884.6,441.1 867.2,440.1 867.4,434.5 867.5,428.9 867.5,423.2 867.3,417.6" fill="#86878e"/>
<polygon points="884.7,440.1 884.3,446.2 883.8,452.2 883.1,458.2 882.3,464.3 865.0,461.7 865.7,456.1 866.4,450.5 866.9,444.8 867.2,439.2" fill="#85868d"/>
<polygon points="882.4,463.3 881.4,469.3 880.3,475.2 879.1,481.2 877.7,487.1 860.7,482.9 862.0,477.4 863.2,471.9 864.2,466.3 865.1,460.7" fill="#85868c"/>
<polygon points="877.9,486.1 876.4,492.0 874.8,497.8 873.0,503.6 871.0,509.4 854.6,503.6 856.4,498.2 858.0,492.9 859.6,487.4 861.0,482.0" fill="#84858b"/>
<polygon points="871.4,508.4 869.3,514.1 867.1,519.8 864.8,525.4 862.3,531.0 846.4,523.6 848.7,518.5 850.9,513.3 852.9,508.0 854.9,502.7" fill="#83848a"/>
<polygon points="862.7,530.0 860.2,535.5 857.4,541.0 854.6,546.3 851.6,551.6 836.5,542.9 839.3,537.9 841.9,533.0 844.4,527.9 846.8,522.8" fill="#818288"/>
<polygon points="852.1,550.8 849.0,556.0 845.8,561.1 842.5,566.2 839.0,571.2 824.8,561.1 828.0,556.4 831.1,551.7 834.1,546.9 837.0,542.1" fill="#7e7f85"/>
<polygon points="839.6,570.4 836.1,575.3 832.4,580.1 828.6,584.8 824.7,589.5 811.4,578.1 815.1,573.8 818.6,569.4 822.0,564.9 825.3,560.3" fill="#7a7b81"/>
<polygon points="825.3,588.7 821.3,593.3 817.2,597.8 813.0,602.1 808.7,606.4 796.6,593.8 800.6,589.8 804.5,585.8 808.3,581.6 812.0,577.4" fill="#77787e"/>
<polygon points="809.4,605.7 805.0,609.8 800.4,613.9 795.8,617.8 791.1,621.7 780.3,608.0 784.6,604.4 788.9,600.8 793.1,597.0 797.2,593.1" fill="#73747a"/>
<polygon points="791.9,621.1 787.1,624.8 782.2,628.4 777.3,631.9 772.2,635.3 762.7,620.6 767.4,617.5 772.0,614.2 776.5,610.9 781.0,607.4" fill="#6e6f75"/>
<polygon points="773.1,634.7 768.0,638.0 762.8,641.1 757.5,644.2 752.2,647.0 744.0,631.6 749.0,628.9 753.9,626.1 758.7,623.2 763.5,620.1" fill="#696a70"/>
<polygon points="753.0,646.6 747.6,649.4 742.2,652.0 736.7,654.5 731.1,656.9 724.4,640.7 729.6,638.5 734.8,636.2 739.8,633.7 744.9,631.1" fill="#64656b"/>
<polygon points="732.0,656.5 726.4,658.8 720.7,660.9 714.9,662.9 709.2,664.7 704.1,648.0 709.4,646.3 714.8,644.4 720.1,642.5 725.3,640.4" fill="#5e5f65"/>
<polygon points="710.1,664.4 704.3,666.1 698.4,667.7 692.5,669.1 686.6,670.4 683.1,653.3 688.6,652.1 694.1,650.8 699.5,649.3 704.9,647.7" fill="#5b5c62"/>
<polygon points="687.6,670.2 681.6,671.4 675.6,672.4 669.6,673.3 663.6,674.0 661.7,656.6 667.3,656.0 672.9,655.2 678.5,654.2 684.0,653.1" fill="#5a5b61"/>
<polygon points="664.6,673.9 658.6,674.5 652.5,675.0 646.5,675.3 640.4,675.4 640.1,658.0 645.8,657.8 651.4,657.5 657.0,657.1 662.6,656.5" fill="#595a60"/>
<polygon points="641.4,675.4 635.3,675.5 629.2,675.4 623.2,675.1 617.1,674.7 618.5,657.3 624.1,657.7 629.8,657.9 635.4,658.0 641.1,658.0" fill="#58595f"/>
<polygon points="618.1,674.8 612.1,674.2 606.0,673.6 600.0,672.7 594.0,671.8 597.1,654.6 602.6,655.5 608.2,656.2 613.8,656.9 619.4,657.3" fill="#57585e"/>
<polygon points="595.0,671.9 589.1,670.8 583.1,669.6 577.2,668.2 571.3,666.7 575.9,649.8 581.4,651.3 586.9,652.5 592.4,653.7 598.0,654.7" fill="#56575d"/>
<polygon points="572.3,666.9 566.5,665.3 560.7,663.5 554.9,661.6 549.2,659.5 555.4,643.2 560.7,645.1 566.0,646.9 571.4,648.5 576.8,650.1" fill="#54555b"/>
<polygon points="550.1,659.9 544.5,657.7 538.9,655.3 533.3,652.9 527.8,650.3 535.5,634.6 540.6,637.0 545.8,639.3 551.0,641.4 556.2,643.5" fill="#53545a"/>
<polygon points="528.7,650.7 523.3,648.0 517.9,645.2 512.7,642.2 507.4,639.1 516.5,624.2 521.4,627.1 526.3,629.8 531.3,632.5 536.3,635.0" fill="#525359"/>
<polygon points="508.3,639.6 503.1,636.4 498.1,633.1 493.1,629.6 488.2,626.1 498.6,612.1 503.2,615.4 507.8,618.6 512.5,621.7 517.3,624.7" fill="#515258"/>
<polygon points="489.0,626.6 484.1,623.0 479.4,619.2 474.7,615.3 470.2,611.3 481.9,598.3 486.2,602.0 490.5,605.7 494.9,609.2 499.4,612.6" fill="#5f6067"/>
<polygon points="470.9,611.9 466.5,607.8 462.1,603.6 457.9,599.3 453.7,594.9 466.6,583.1 470.5,587.2 474.4,591.2 478.5,595.1 482.6,598.9" fill="#72737e"/>
<polygon points="454.4,595.6 450.3,591.1 446.4,586.5 442.5,581.8 438.8,577.0 452.8,566.4 456.2,570.9 459.8,575.3 463.4,579.5 467.2,583.7" fill="#8d8e9b"/>
<polygon points="439.4,577.8 435.8,572.9 432.3,567.9 428.9,562.9 425.7,557.8 440.5,548.6 443.6,553.3 446.7,558.0 449.9,562.6 453.3,567.2" fill="#9596a5"/>
<polygon points="426.2,558.6 423.0,553.4 420.0,548.2 417.1,542.8 414.4,537.4 430.0,529.7 432.6,534.7 435.3,539.7 438.1,544.5 441.0,549.4" fill="#9495a4"/>
<polygon points="414.8,538.3 412.2,532.9 409.6,527.3 407.3,521.8 405.0,516.1 421.3,509.9 423.4,515.1 425.6,520.3 428.0,525.4 430.4,530.5" fill="#9394a3"/>
<polygon points="405.4,517.0 403.3,511.4 401.3,505.6 399.4,499.8 397.7,494.0 414.6,489.3 416.1,494.7 417.9,500.1 419.7,505.4 421.7,510.7" fill="#9293a1"/>
<polygon points="398.0,495.0 396.4,489.1 395.0,483.2 393.7,477.3 392.5,471.3 409.7,468.2 410.8,473.8 412.0,479.3 413.3,484.8 414.8,490.2" fill="#9192a0"/>
<polygon points="392.7,472.3 391.7,466.3 390.8,460.3 390.1,454.3 389.5,448.3 406.9,446.8 407.4,452.4 408.1,458.0 408.9,463.6 409.9,469.1" fill="#80818c"/>
<polygon points="389.6,449.3 389.1,443.2 388.8,437.2 388.6,431.1 388.6,425.0 406.1,425.2 406.1,430.8 406.2,436.5 406.5,442.1 407.0,447.7" fill="#6b6c73"/>
<polygon points="388.6,426.0 388.7,419.9 388.9,413.9 389.3,407.8 389.9,401.8 407.3,403.6 406.8,409.2 406.4,414.8 406.1,420.5 406.1,426.1" fill="#5d5e64"/>
<polygon points="389.8,402.8 390.5,396.7 391.3,390.7 392.2,384.7 393.4,378.8 410.5,382.2 409.5,387.7 408.6,393.3 407.8,398.9 407.2,404.5" fill="#505157"/>
<polygon points="393.2,379.8 394.4,373.8 395.8,367.9 397.3,362.0 399.0,356.2 415.7,361.2 414.2,366.6 412.7,372.1 411.5,377.6 410.3,383.1" fill="#4c4d53"/>
<polygon points="398.7,357.1 400.5,351.3 402.4,345.6 404.5,339.9 406.7,334.2 422.9,340.8 420.8,346.0 418.9,351.3 417.1,356.7 415.4,362.1" fill="#494a4f"/>
<polygon points="406.3,335.2 408.6,329.5 411.1,324.0 413.7,318.5 416.4,313.1 431.9,321.1 429.4,326.2 427.0,331.3 424.7,336.4 422.5,341.6" fill="#45464c"/>
<polygon points="415.9,314.0 418.8,308.6 421.7,303.3 424.8,298.1 428.0,293.0 442.7,302.4 439.7,307.2 436.9,312.0 434.1,317.0 431.5,321.9" fill="#424348"/>
<polygon points="427.5,293.8 430.8,288.7 434.3,283.7 437.8,278.8 441.5,274.0 455.3,284.8 451.9,289.3 448.5,293.8 445.3,298.5 442.2,303.2" fill="#424348"/>
<polygon points="440.9,274.8 444.7,270.0 448.6,265.4 452.6,260.8 456.7,256.4 469.4,268.4 465.6,272.6 461.9,276.8 458.2,281.1 454.7,285.5" fill="#424348"/>
<polygon points="456.1,257.1 460.3,252.7 464.6,248.5 469.0,244.3 473.5,240.3 485.0,253.4 480.8,257.2 476.7,261.1 472.7,265.0 468.8,269.1" fill="#424348"/>
<polygon points="472.8,240.9 477.4,237.0 482.1,233.1 486.9,229.4 491.8,225.8 502.0,240.0 497.4,243.3 493.0,246.8 488.6,250.4 484.3,254.0" fill="#424348"/>
<polygon points="491.0,226.4 495.9,222.9 500.9,219.5 506.1,216.2 511.3,213.1 520.1,228.2 515.3,231.1 510.5,234.1 505.8,237.3 501.2,240.5" fill="#424348"/>
<polygon points="510.4,213.6 515.7,210.6 521.0,207.7 526.4,204.9 531.9,202.3 539.3,218.1 534.2,220.6 529.1,223.1 524.2,225.8 519.3,228.7" fill="#424348"/>
<polygon points="531.0,202.7 536.5,200.2 542.1,197.8 547.7,195.6 553.4,193.5 559.3,209.9 554.0,211.9 548.7,214.0 543.5,216.2 538.4,218.5" fill="#424348"/>
<polygon points="552.5,193.8 558.2,191.8 564.0,190.0 569.8,188.2 575.7,186.7 580.0,203.6 574.5,205.1 569.1,206.7 563.7,208.4 558.4,210.2" fill="#424348"/>
<polygon points="574.7,186.9 580.6,185.5 586.5,184.2 592.5,183.0 598.4,182.0 601.1,199.3 595.6,200.2 590.0,201.3 584.5,202.5 579.1,203.8" fill="#424348"/>
<polygon points="597.5,182.2 603.5,181.3 609.5,180.5 615.5,179.9 621.6,179.5 622.7,196.9 617.0,197.3 611.4,197.9 605.8,198.6 600.2,199.4" fill="#424348"/>
<polygon points="620.6,179.6 626.6,179.2 632.7,179.1 638.8,179.0 644.8,179.2 644.3,196.6 638.6,196.5 633.0,196.5 627.4,196.7 621.7,197.0" fill="#424348"/>
<polygon points="628.9,296.1 634.9,295.9 640.9,296.0 647.0,296.3 653.0,296.9 650.8,314.2 645.6,313.7 640.4,313.4 635.2,313.4 629.9,313.6" fill="#505157"/>
<polygon points="652.4,296.8 658.4,297.7 664.3,298.8 670.2,300.2 676.0,301.9 670.8,318.6 665.7,317.1 660.7,315.9 655.5,314.9 650.4,314.2" fill="#515258"/>
<polygon points="675.5,301.7 681.2,303.6 686.8,305.8 692.3,308.2 697.7,310.9 689.6,326.4 684.9,324.0 680.2,322.0 675.3,320.1 670.3,318.4" fill="#55565c"/>
<polygon points="697.3,310.6 702.5,313.5 707.7,316.7 712.7,320.0 717.5,323.6 706.8,337.4 702.6,334.3 698.3,331.4 693.8,328.7 689.2,326.2" fill="#56575d"/>
<polygon points="717.1,323.3 721.8,327.1 726.3,331.1 730.6,335.3 734.7,339.7 721.7,351.4 718.1,347.5 714.4,343.9 710.5,340.4 706.4,337.1" fill="#57585e"/>
<polygon points="734.4,339.3 738.3,343.9 742.0,348.6 745.5,353.5 748.8,358.6 733.9,367.7 731.1,363.3 728.0,359.1 724.8,355.0 721.4,351.0" fill="#65666c"/>
<polygon points="748.5,358.2 751.6,363.4 754.4,368.7 756.9,374.1 759.2,379.7 743.0,386.0 740.9,381.2 738.7,376.5 736.3,371.9 733.6,367.3" fill="#7e7f88"/>
<polygon points="759.1,379.2 761.1,384.9 762.9,390.6 764.5,396.4 765.8,402.3 748.6,405.6 747.5,400.5 746.2,395.5 744.6,390.5 742.8,385.6" fill="#9c9dae"/>
<polygon points="765.7,401.8 766.7,407.8 767.5,413.7 767.9,419.7 768.1,425.8 750.7,426.0 750.5,420.7 750.1,415.5 749.4,410.3 748.5,405.2" fill="#9c9daf"/>
<polygon points="768.1,425.2 768.1,431.3 767.8,437.3 767.2,443.3 766.3,449.2 749.1,446.3 749.8,441.1 750.3,435.9 750.6,430.7 750.7,425.5" fill="#9192a2"/>
<polygon points="766.4,448.7 765.3,454.6 763.9,460.5 762.2,466.3 760.3,472.0 743.9,466.0 745.5,461.1 747.0,456.1 748.2,451.0 749.1,445.9" fill="#7a7b87"/>
<polygon points="760.5,471.5 758.3,477.1 755.9,482.7 753.2,488.1 750.3,493.3 735.2,484.5 737.7,480.0 740.0,475.3 742.1,470.5 744.0,465.6" fill="#5d5e66"/>
<polygon points="750.6,492.9 747.4,498.0 744.1,503.0 740.5,507.9 736.7,512.5 723.4,501.2 726.7,497.1 729.8,492.9 732.7,488.6 735.4,484.1" fill="#494a51"/>
<polygon points="737.0,512.1 733.0,516.6 728.8,521.0 724.4,525.1 719.9,529.0 708.8,515.5 712.8,512.1 716.6,508.5 720.2,504.8 723.7,500.8" fill="#404147"/>
<polygon points="720.3,528.7 715.5,532.4 710.6,535.9 705.6,539.2 700.4,542.2 691.9,526.9 696.4,524.3 700.8,521.4 705.1,518.4 709.2,515.2" fill="#404147"/>
<polygon points="700.8,541.9 695.5,544.8 690.0,547.3 684.5,549.6 678.8,551.7 673.2,535.1 678.1,533.4 683.0,531.4 687.7,529.1 692.3,526.7" fill="#404147"/>
<polygon points="679.3,551.5 673.6,553.4 667.7,554.9 661.8,556.2 655.9,557.2 653.4,539.9 658.5,539.0 663.6,537.9 668.7,536.6 673.6,535.0" fill="#404147"/>
<polygon points="656.4,557.1 650.5,557.9 644.4,558.4 638.4,558.6 632.4,558.5 633.0,541.1 638.2,541.1 643.4,540.9 648.6,540.5 653.8,539.8" fill="#4f5056"/>
<polygon points="632.9,558.5 626.9,558.2 620.9,557.6 614.9,556.8 609.0,555.6 612.7,538.6 617.9,539.5 623.0,540.3 628.2,540.8 633.4,541.1" fill="#5e5f65"/>
<polygon points="609.5,555.7 603.7,554.4 597.9,552.7 592.2,550.8 586.6,548.6 593.2,532.5 598.1,534.4 603.1,536.0 608.1,537.4 613.2,538.6" fill="#727379"/>
<polygon points="587.0,548.8 581.5,546.4 576.1,543.7 570.8,540.8 565.7,537.7 575.2,523.0 579.6,525.7 584.2,528.2 588.9,530.5 593.7,532.6" fill="#86878d"/>
<polygon points="566.1,538.0 561.1,534.6 556.3,531.0 551.6,527.2 547.1,523.2 559.0,510.4 562.9,513.9 567.0,517.2 571.2,520.3 575.5,523.2" fill="#86878d"/>
<polygon points="547.5,523.6 543.2,519.4 539.0,515.0 535.1,510.4 531.4,505.7 545.4,495.2 548.7,499.3 552.1,503.3 555.6,507.1 559.4,510.8" fill="#86878d"/>
<polygon points="531.7,506.1 528.2,501.2 525.0,496.1 521.9,490.9 519.1,485.6 534.8,477.8 537.2,482.4 539.8,487.0 542.7,491.3 545.7,495.6" fill="#85868c"/>
<polygon points="519.3,486.1 516.8,480.6 514.5,475.0 512.4,469.4 510.6,463.6 527.4,458.8 528.9,463.8 530.7,468.7 532.7,473.5 535.0,478.2" fill="#85868c"/>
<polygon points="510.7,464.1 509.2,458.3 507.9,452.4 506.9,446.5 506.1,440.5 523.5,438.7 524.2,443.9 525.0,449.1 526.2,454.2 527.5,459.2" fill="#85868c"/>
<polygon points="506.2,441.0 505.7,435.0 505.5,429.0 505.5,423.0 505.9,417.0 523.3,418.3 523.0,423.5 522.9,428.8 523.1,434.0 523.6,439.2" fill="#85868c"/>
<polygon points="505.8,417.5 506.4,411.5 507.3,405.5 508.4,399.6 509.8,393.7 526.7,398.2 525.5,403.3 524.5,408.4 523.7,413.6 523.2,418.8" fill="#85868c"/>
<polygon points="509.7,394.3 511.3,388.5 513.2,382.7 515.4,377.1 517.8,371.6 533.6,379.0 531.5,383.8 529.7,388.7 528.0,393.6 526.6,398.6" fill="#85868c"/>
<polygon points="517.6,372.1 520.3,366.7 523.2,361.4 526.3,356.3 529.7,351.3 543.9,361.4 541.0,365.7 538.3,370.2 535.8,374.7 533.5,379.4" fill="#85868c"/>
<polygon points="529.4,351.7 532.9,346.8 536.7,342.2 540.7,337.7 545.0,333.3 557.2,345.8 553.5,349.6 550.1,353.5 546.8,357.5 543.7,361.7" fill="#84858b"/>
<polygon points="544.6,333.7 549.0,329.6 553.5,325.7 558.3,321.9 563.2,318.5 573.0,332.9 568.7,336.0 564.6,339.2 560.7,342.6 556.8,346.2" fill="#84858b"/>
<polygon points="562.8,318.8 567.8,315.5 573.0,312.4 578.4,309.6 583.8,307.1 590.9,323.1 586.1,325.3 581.5,327.7 577.0,330.3 572.6,333.2" fill="#84858b"/>
<polygon points="583.3,307.3 588.9,305.0 594.5,302.9 600.3,301.1 606.1,299.5 610.2,316.5 605.2,317.9 600.2,319.4 595.3,321.2 590.4,323.2" fill="#6c6d73"/>
<polygon points="605.6,299.7 611.5,298.4 617.4,297.3 623.4,296.6 629.4,296.1 630.4,313.6 625.2,314.0 620.0,314.6 614.9,315.5 609.8,316.6" fill="#58595f"/>
<polygon points="616.6,306.8 610.7,304.5 605.0,301.7 599.7,298.2 594.7,294.3 606.2,281.1 609.9,284.0 613.7,286.5 617.8,288.6 622.1,290.2" fill="#9a9bac"/>
<polygon points="594.9,294.5 590.4,290.1 586.2,285.3 582.6,280.1 579.5,274.5 595.2,266.8 597.4,270.8 600.1,274.6 603.1,278.1 606.4,281.3" fill="#7c7d88"/>
<polygon points="579.6,274.8 577.1,269.0 575.1,263.0 573.8,256.8 573.0,250.5 590.5,249.3 591.0,253.9 592.0,258.4 593.4,262.7 595.3,267.0" fill="#4b4c52"/>
<polygon points="573.1,250.7 572.9,244.4 573.4,238.1 574.5,231.8 576.3,225.8 592.8,231.3 591.6,235.8 590.8,240.3 590.4,244.9 590.5,249.5" fill="#494a4f"/>
<polygon points="576.2,226.0 578.5,220.1 581.3,214.4 584.8,209.1 588.7,204.1 601.9,215.6 599.0,219.3 596.5,223.1 594.4,227.2 592.8,231.5" fill="#47484d"/>
<polygon points="588.5,204.3 592.9,199.8 597.7,195.6 602.9,192.0 608.5,188.9 616.2,204.6 612.2,206.8 608.4,209.5 604.9,212.5 601.7,215.8" fill="#47484d"/>
<polygon points="608.2,189.0 614.0,186.5 620.0,184.5 626.2,183.2 632.5,182.4 633.7,199.9 629.1,200.4 624.6,201.4 620.3,202.8 616.0,204.7" fill="#5b5c62"/>
<polygon points="632.3,182.5 638.6,182.3 644.9,182.8 651.2,183.9 657.2,185.7 651.7,202.2 647.2,201.0 642.7,200.2 638.1,199.8 633.5,199.9" fill="#797a80"/>
<polygon points="657.0,185.6 662.9,187.9 668.6,190.7 673.9,194.2 678.9,198.1 667.4,211.3 663.7,208.4 659.9,205.9 655.8,203.8 651.5,202.2" fill="#92939a"/>
<polygon points="678.7,197.9 683.2,202.3 687.4,207.1 691.0,212.3 694.1,217.9 678.4,225.6 676.2,221.6 673.5,217.8 670.5,214.3 667.2,211.1" fill="#96979f"/>
<polygon points="694.0,217.6 696.5,223.4 698.5,229.4 699.8,235.6 700.6,241.9 683.1,243.1 682.6,238.5 681.6,234.0 680.2,229.7 678.3,225.4" fill="#909199"/>
<polygon points="700.5,241.7 700.7,248.0 700.2,254.3 699.1,260.6 697.3,266.6 680.8,261.1 682.0,256.6 682.8,252.1 683.2,247.5 683.1,242.9" fill="#8c8d93"/>
<polygon points="697.4,266.4 695.1,272.3 692.3,278.0 688.8,283.3 684.9,288.3 671.7,276.8 674.6,273.1 677.1,269.3 679.2,265.2 680.8,260.9" fill="#85868c"/>
<polygon points="685.1,288.1 680.7,292.6 675.9,296.8 670.7,300.4 665.1,303.5 657.4,287.8 661.4,285.6 665.2,282.9 668.7,279.9 671.9,276.6" fill="#505157"/>
<polygon points="665.4,303.4 659.6,305.9 653.6,307.9 647.4,309.2 641.1,310.0 639.9,292.5 644.5,292.0 649.0,291.0 653.3,289.6 657.6,287.7" fill="#4d4e54"/>
<polygon points="641.3,309.9 635.0,310.1 628.7,309.6 622.4,308.5 616.4,306.7 621.9,290.2 626.4,291.4 630.9,292.2 635.5,292.6 640.1,292.5" fill="#696a72"/>
<polygon points="644.8,544.9 651.0,546.0 657.1,547.7 663.0,550.0 668.7,552.9 660.0,568.1 655.9,566.0 651.6,564.3 647.1,563.0 642.6,562.2" fill="#88898f"/>
<polygon points="668.4,552.8 673.8,556.2 678.8,560.1 683.3,564.5 687.4,569.3 673.6,580.0 670.6,576.5 667.3,573.3 663.7,570.4 659.8,568.0" fill="#9b9ca3"/>
<polygon points="687.3,569.1 690.9,574.3 694.0,579.8 696.5,585.6 698.5,591.7 681.6,596.2 680.2,591.8 678.4,587.6 676.1,583.6 673.5,579.8" fill="#92939c"/>
<polygon points="698.4,591.4 699.8,597.6 700.5,603.9 700.7,610.2 700.2,616.5 682.8,614.3 683.2,609.7 683.1,605.1 682.6,600.5 681.6,596.0" fill="#8e8f96"/>
<polygon points="700.2,616.3 699.1,622.5 697.4,628.6 695.1,634.5 692.2,640.2 677.0,631.5 679.1,627.4 680.8,623.1 682.1,618.6 682.9,614.1" fill="#88898f"/>
<polygon points="692.3,639.9 688.9,645.3 685.0,650.3 680.6,654.8 675.8,658.9 665.1,645.1 668.6,642.1 671.8,638.8 674.7,635.2 677.1,631.3" fill="#595a60"/>
<polygon points="676.0,658.8 670.8,662.4 665.3,665.5 659.5,668.0 653.4,670.0 648.9,653.1 653.3,651.7 657.5,649.9 661.5,647.6 665.3,645.0" fill="#4b4c52"/>
<polygon points="653.7,669.9 647.5,671.3 641.2,672.0 634.9,672.2 628.6,671.7 630.8,654.3 635.4,654.7 640.0,654.6 644.6,654.1 649.1,653.1" fill="#4f5056"/>
<polygon points="628.8,671.7 622.6,670.6 616.5,668.9 610.6,666.6 604.9,663.7 613.6,648.5 617.7,650.6 622.0,652.3 626.5,653.6 631.0,654.4" fill="#868792"/>
<polygon points="605.2,663.8 599.8,660.4 594.8,656.5 590.3,652.1 586.2,647.3 600.0,636.6 603.0,640.1 606.3,643.3 609.9,646.2 613.8,648.6" fill="#999aab"/>
<polygon points="586.3,647.5 582.7,642.3 579.6,636.8 577.1,631.0 575.1,624.9 592.0,620.4 593.4,624.8 595.2,629.0 597.5,633.0 600.1,636.8" fill="#4c4d53"/>
<polygon points="575.2,625.2 573.8,619.0 573.1,612.7 572.9,606.4 573.4,600.1 590.8,602.3 590.4,606.9 590.5,611.5 591.0,616.1 592.0,620.6" fill="#4a4b50"/>
<polygon points="573.4,600.3 574.5,594.1 576.2,588.0 578.5,582.1 581.4,576.4 596.6,585.1 594.5,589.2 592.8,593.5 591.5,598.0 590.7,602.5" fill="#48494e"/>
<polygon points="581.3,576.7 584.7,571.3 588.6,566.3 593.0,561.8 597.8,557.7 608.5,571.5 605.0,574.5 601.8,577.8 598.9,581.4 596.5,585.3" fill="#46474c"/>
<polygon points="597.6,557.8 602.8,554.2 608.3,551.1 614.1,548.6 620.2,546.6 624.7,563.5 620.3,564.9 616.1,566.7 612.1,569.0 608.3,571.6" fill="#505157"/>
<polygon points="619.9,546.7 626.1,545.3 632.4,544.6 638.7,544.4 645.0,544.9 642.8,562.3 638.2,561.9 633.6,562.0 629.0,562.5 624.5,563.5" fill="#6a6b71"/>
<radialGradient id="rs" gradientUnits="userSpaceOnUse" cx="636.8" cy="427.2" r="131.3"><stop offset="0.878" stop-color="#000" stop-opacity="0.10"/><stop offset="0.939" stop-color="#000" stop-opacity="0"/><stop offset="0.939" stop-color="#fff" stop-opacity="0"/><stop offset="1" stop-color="#fff" stop-opacity="0.07"/></radialGradient>
<linearGradient id="rsm" gradientUnits="userSpaceOnUse" x1="623.7" y1="0" x2="735.3" y2="0"><stop offset="0" stop-color="#000"/><stop offset="1" stop-color="#fff"/></linearGradient>
<mask id="rsk" maskUnits="userSpaceOnUse" x="505.4" y="295.9" width="262.7" height="262.7"><rect x="505.4" y="295.9" width="262.7" height="262.7" fill="url(#rsm)"/></mask>
<circle cx="636.8" cy="427.2" r="131.0" fill="url(#rs)" mask="url(#rsk)"/>
<radialGradient id="rp1" gradientUnits="userSpaceOnUse" cx="636.8" cy="246.2" r="63.9"><stop offset="0.750" stop-color="#fff" stop-opacity="0.10"/><stop offset="0.875" stop-color="#fff" stop-opacity="0"/><stop offset="0.875" stop-color="#000" stop-opacity="0"/><stop offset="1" stop-color="#000" stop-opacity="0.16"/></radialGradient>
<linearGradient id="rp1m" gradientUnits="userSpaceOnUse" x1="649.6" y1="0" x2="598.5" y2="0"><stop offset="0" stop-color="#000"/><stop offset="1" stop-color="#fff"/></linearGradient>
<mask id="rp1k" maskUnits="userSpaceOnUse" x="572.9" y="182.3" width="127.8" height="127.8"><rect x="572.9" y="182.3" width="127.8" height="127.8" fill="url(#rp1m)"/></mask>
<circle cx="636.8" cy="246.2" r="63.6" fill="url(#rp1)" mask="url(#rp1k)"/>
<radialGradient id="rp2" gradientUnits="userSpaceOnUse" cx="636.8" cy="608.3" r="63.9"><stop offset="0.750" stop-color="#fff" stop-opacity="0.10"/><stop offset="0.875" stop-color="#fff" stop-opacity="0"/><stop offset="0.875" stop-color="#000" stop-opacity="0"/><stop offset="1" stop-color="#000" stop-opacity="0.16"/></radialGradient>
<linearGradient id="rp2m" gradientUnits="userSpaceOnUse" x1="649.6" y1="0" x2="598.5" y2="0"><stop offset="0" stop-color="#000"/><stop offset="1" stop-color="#fff"/></linearGradient>
<mask id="rp2k" maskUnits="userSpaceOnUse" x="572.9" y="544.4" width="127.8" height="127.8"><rect x="572.9" y="544.4" width="127.8" height="127.8" fill="url(#rp2m)"/></mask>
<circle cx="636.8" cy="608.3" r="63.6" fill="url(#rp2)" mask="url(#rp2k)"/>
<path d="M367.0,427.2 A269.8,269.8 0 1 0 906.6,427.2 A269.8,269.8 0 1 0 367.0,427.2 Z M636.0,180.5 L638.5,189.4 L640.6,196.5 L647.1,196.7 L649.6,189.7 L652.6,181.0 L659.1,181.5 L660.7,190.6 L662.2,197.9 L668.6,198.7 L671.8,192.0 L675.6,183.6 L682.0,184.7 L682.8,193.9 L683.5,201.3 L689.9,202.7 L693.7,196.3 L698.3,188.3 L704.5,190.0 L704.4,199.2 L704.5,206.6 L710.7,208.6 L715.0,202.6 L720.4,195.1 L726.4,197.4 L725.5,206.6 L724.8,214.0 L730.8,216.5 L735.7,211.0 L741.7,204.0 L747.6,206.8 L745.8,215.8 L744.4,223.1 L750.1,226.2 L755.6,221.2 L762.2,214.8 L767.7,218.1 L765.1,227.0 L763.1,234.1 L768.5,237.7 L774.3,233.2 L781.5,227.4 L786.7,231.3 L783.3,239.9 L780.6,246.8 L785.6,250.9 L791.9,246.9 L799.6,241.9 L804.4,246.2 L800.2,254.4 L796.9,261.0 L801.5,265.6 L808.1,262.2 L816.2,257.9 L820.6,262.7 L815.6,270.5 L811.7,276.8 L815.9,281.7 L822.8,279.0 L831.3,275.5 L835.2,280.6 L829.5,287.9 L825.1,293.8 L828.7,299.2 L835.9,297.1 L844.7,294.4 L848.1,299.9 L841.7,306.5 L836.7,312.0 L839.9,317.7 L847.2,316.3 L856.2,314.4 L859.1,320.2 L852.2,326.3 L846.6,331.2 L849.2,337.2 L856.6,336.5 L865.8,335.4 L868.1,341.5 L860.7,346.9 L854.7,351.3 L856.7,357.5 L864.2,357.5 L873.4,357.3 L875.2,363.5 L867.2,368.2 L860.9,372.1 L862.3,378.4 L869.7,379.1 L878.9,379.8 L880.1,386.1 L871.7,390.0 L865.0,393.3 L865.9,399.7 L873.2,401.1 L882.3,402.6 L882.9,409.1 L874.2,412.2 L867.2,414.8 L867.5,421.3 L874.6,423.3 L883.5,425.7 L883.5,432.2 L874.5,434.5 L867.4,436.4 L867.0,442.9 L873.9,445.6 L882.6,448.8 L881.9,455.3 L872.8,456.7 L865.5,458.0 L864.5,464.4 L871.2,467.7 L879.5,471.8 L878.2,478.1 L869.0,478.7 L861.6,479.3 L860.1,485.6 L866.4,489.5 L874.2,494.3 L872.4,500.5 L863.2,500.2 L855.8,500.1 L853.6,506.2 L859.5,510.7 L866.9,516.2 L864.5,522.2 L855.4,521.1 L848.0,520.3 L845.3,526.2 L850.7,531.2 L857.6,537.4 L854.6,543.1 L845.6,541.1 L838.3,539.6 L835.1,545.3 L840.0,550.8 L846.3,557.6 L842.8,563.0 L834.0,560.2 L826.9,558.0 L823.2,563.3 L827.6,569.3 L833.2,576.6 L829.2,581.7 L820.7,578.1 L813.8,575.2 L809.6,580.2 L813.4,586.5 L818.3,594.4 L813.9,599.1 L805.8,594.6 L799.2,591.2 L794.5,595.7 L797.7,602.4 L801.9,610.6 L797.0,614.9 L789.4,609.7 L783.1,605.7 L778.1,609.7 L780.6,616.7 L784.0,625.3 L778.7,629.1 L771.6,623.2 L765.8,618.6 L760.4,622.1 L762.3,629.3 L764.8,638.2 L759.2,641.5 L752.7,635.0 L747.3,629.8 L741.6,632.8 L742.8,640.2 L744.5,649.2 L738.6,652.0 L732.7,644.9 L727.9,639.3 L721.9,641.8 L722.4,649.2 L723.2,658.3 L717.1,660.5 L711.9,652.9 L707.6,646.9 L701.4,648.8 L701.2,656.2 L701.2,665.4 L694.9,667.0 L690.4,659.0 L686.7,652.5 L680.4,653.8 L679.5,661.2 L678.6,670.4 L672.2,671.4 L668.5,663.0 L665.4,656.2 L659.0,656.9 L657.4,664.2 L655.7,673.3 L649.2,673.7 L646.3,664.9 L643.8,657.9 L637.4,658.0 L635.1,665.1 L632.5,673.9 L626.1,673.7 L624.0,664.8 L622.2,657.5 L615.7,657.0 L612.9,663.9 L609.5,672.5 L603.0,671.7 L601.8,662.5 L600.7,655.2 L594.3,654.1 L590.8,660.6 L586.6,668.8 L580.3,667.4 L579.9,658.2 L579.5,650.8 L573.3,649.1 L569.2,655.3 L564.2,663.1 L558.0,661.1 L558.6,651.9 L558.9,644.4 L552.8,642.2 L548.1,647.9 L542.4,655.2 L536.5,652.7 L537.9,643.5 L538.9,636.2 L533.0,633.3 L527.8,638.7 L521.5,645.4 L515.8,642.3 L518.0,633.3 L519.7,626.1 L514.2,622.7 L508.5,627.5 L501.6,633.6 L496.2,630.0 L499.3,621.3 L501.6,614.3 L496.4,610.4 L490.3,614.6 L482.9,620.1 L477.9,616.0 L481.7,607.6 L484.7,600.8 L479.9,596.4 L473.4,600.1 L465.5,604.8 L460.9,600.2 L465.5,592.3 L469.1,585.8 L464.7,581.0 L458.0,584.0 L449.6,588.0 L445.5,583.0 L450.8,575.5 L455.0,569.4 L451.1,564.2 L444.1,566.6 L435.4,569.7 L431.7,564.4 L437.7,557.4 L442.5,551.7 L439.1,546.2 L431.9,548.0 L422.9,550.3 L419.8,544.6 L426.4,538.2 L431.7,533.0 L428.8,527.2 L421.4,528.2 L412.3,529.7 L409.7,523.8 L417.0,518.0 L422.7,513.3 L420.4,507.3 L412.9,507.6 L403.7,508.2 L401.7,502.1 L409.4,497.0 L415.6,492.9 L413.8,486.6 L406.4,486.3 L397.2,486.0 L395.7,479.7 L403.9,475.4 L410.4,471.9 L409.2,465.5 L401.9,464.5 L392.7,463.3 L391.9,456.9 L400.4,453.4 L407.2,450.5 L406.7,444.0 L399.4,442.3 L390.4,440.3 L390.2,433.9 L399.0,431.2 L406.1,428.9 L406.1,422.4 L399.1,420.0 L390.3,417.2 L390.6,410.7 L399.7,408.9 L406.9,407.3 L407.6,400.8 L400.8,397.8 L392.3,394.2 L393.3,387.8 L402.4,386.8 L409.8,385.8 L411.1,379.5 L404.6,375.8 L396.5,371.4 L398.0,365.1 L407.2,365.0 L414.7,364.8 L416.5,358.5 L410.4,354.3 L402.8,349.2 L404.9,343.0 L414.1,343.8 L421.5,344.2 L423.9,338.2 L418.2,333.4 L411.1,327.6 L413.8,321.7 L422.9,323.3 L430.2,324.4 L433.2,318.7 L428.0,313.4 L421.4,306.9 L424.7,301.3 L433.6,303.7 L440.8,305.5 L444.3,300.1 L439.6,294.3 L433.6,287.2 L437.4,282.0 L446.0,285.2 L453.0,287.7 L457.0,282.6 L452.9,276.4 L447.6,268.8 L451.9,263.9 L460.2,268.0 L466.9,271.1 L471.3,266.4 L467.8,259.9 L463.3,251.8 L468.0,247.3 L475.9,252.1 L482.3,255.9 L487.1,251.6 L484.2,244.8 L480.5,236.3 L485.6,232.3 L493.0,237.8 L499.0,242.2 L504.2,238.4 L502.0,231.3 L499.1,222.5 L504.5,219.0 L511.3,225.2 L516.9,230.1 L522.5,226.8 L520.9,219.5 L518.8,210.5 L524.6,207.5 L530.8,214.3 L535.9,219.7 L541.8,217.0 L540.9,209.6 L539.7,200.5 L545.6,198.0 L551.2,205.3 L555.8,211.2 L561.9,209.0 L561.7,201.6 L561.3,192.4 L567.5,190.5 L572.4,198.3 L576.4,204.6 L582.7,202.9 L583.2,195.5 L583.6,186.3 L590.0,185.0 L594.1,193.3 L597.5,199.9 L603.9,198.9 L605.1,191.5 L606.4,182.4 L612.9,181.7 L616.2,190.3 L619.0,197.2 L625.4,196.8 L627.3,189.6 L629.5,180.6 Z" fill="url(#gface)" fill-rule="evenodd"/>
<polygon points="622.0,312.8 623.6,303.7 624.9,296.4 633.4,295.9 635.6,303.0 638.2,311.9 642.7,312.0 645.8,303.3 648.5,296.4 656.9,297.4 657.8,304.8 658.7,314.0 663.2,314.9 667.8,306.9 671.6,300.6 679.7,303.1 679.3,310.5 678.6,319.7 682.8,321.5 688.8,314.4 693.7,308.9 701.2,312.8 699.5,320.0 697.1,328.9 701.0,331.4 708.1,325.5 713.9,320.9 720.6,326.1 717.6,332.9 713.7,341.3 717.1,344.4 725.1,339.9 731.7,336.4 737.3,342.7 733.2,348.8 727.8,356.4 730.6,360.0 739.3,357.1 746.4,354.8 750.8,362.0 745.6,367.3 739.0,373.8 741.1,377.9 750.2,376.5 757.5,375.5 760.6,383.4 754.6,387.7 746.9,392.9 748.2,397.3 757.4,397.6 764.8,397.9 766.5,406.2 759.8,409.4 751.3,413.1 751.8,417.6 760.8,419.6 768.0,421.3 768.1,429.7 761.0,431.6 752.0,433.8 751.6,438.3 760.2,441.8 767.0,444.8 765.6,453.1 758.2,453.7 749.0,454.2 747.8,458.7 755.6,463.6 761.8,467.7 758.9,475.7 751.5,475.0 742.3,473.8 740.4,478.0 747.2,484.3 752.5,489.4 748.3,496.7 741.2,494.7 732.3,491.9 729.7,495.7 735.2,503.1 739.6,509.1 734.1,515.5 727.4,512.2 719.2,508.0 716.0,511.1 720.1,519.4 723.3,526.1 716.7,531.5 710.8,527.1 703.5,521.4 699.7,523.9 702.3,532.8 704.3,540.0 696.8,544.1 691.8,538.7 685.6,531.8 681.5,533.6 682.4,542.8 683.1,550.2 675.0,552.9 671.0,546.7 666.2,538.8 661.8,539.9 661.1,549.1 660.4,556.5 652.0,557.7 649.1,550.9 645.8,542.3 641.2,542.5 638.9,551.5 636.9,558.6 628.4,558.3 626.9,551.1 625.1,542.0 620.6,541.5 616.7,549.9 613.4,556.5 605.2,554.7 604.9,547.3 604.8,538.1 600.4,536.7 595.1,544.3 590.7,550.3 582.9,547.0 584.0,539.7 585.5,530.6 581.5,528.5 574.9,535.0 569.5,540.1 562.4,535.5 564.8,528.5 567.9,519.8 564.3,517.0 556.6,522.2 550.5,526.2 544.2,520.5 547.8,514.0 552.5,506.0 549.4,502.6 541.0,506.4 534.2,509.2 529.1,502.4 533.8,496.7 539.8,489.7 537.4,485.8 528.4,488.0 521.2,489.6 517.4,482.0 523.0,477.2 530.2,471.3 528.5,467.1 519.3,467.6 511.9,467.9 509.5,459.8 515.9,456.1 524.0,451.6 523.1,447.1 514.0,446.0 506.7,445.0 505.8,436.5 512.7,434.0 521.5,431.1 521.4,426.5 512.6,423.8 505.6,421.5 506.2,413.0 513.5,411.8 522.7,410.4 523.4,405.9 515.2,401.7 508.7,398.1 510.9,389.9 518.3,390.0 527.5,390.3 529.0,386.0 521.7,380.4 516.0,375.7 519.6,368.0 526.8,369.4 535.9,371.4 538.1,367.4 532.0,360.6 527.1,355.0 532.0,348.0 538.9,350.7 547.4,354.3 550.4,350.8 545.5,342.9 541.8,336.6 547.8,330.6 554.1,334.5 561.9,339.5 565.4,336.6 562.1,328.0 559.5,321.0 566.5,316.3 572.0,321.2 578.8,327.5 582.8,325.3 581.0,316.2 579.7,309.0 587.5,305.5 592.0,311.4 597.5,318.8 601.8,317.3 601.7,308.1 601.8,300.7 610.0,298.7 613.4,305.2 617.5,313.5" fill="url(#gface)"/>
<polygon points="628.7,293.4 624.5,301.7 620.8,308.1 612.2,305.2 613.1,297.8 614.8,288.8 611.2,286.7 604.2,292.7 598.3,297.2 591.5,291.3 595.2,284.8 600.2,277.1 597.7,273.8 588.9,276.7 581.7,278.6 577.7,270.6 583.6,266.0 591.1,260.8 590.1,256.8 580.9,256.1 573.5,255.1 572.9,246.1 580.0,244.1 589.0,242.2 589.6,238.1 581.3,233.9 574.9,230.2 577.8,221.6 585.2,222.5 594.2,224.2 596.3,220.6 590.3,213.6 585.8,207.7 591.7,200.9 598.2,204.6 605.9,209.6 609.2,207.1 606.3,198.3 604.4,191.1 612.4,187.1 617.0,193.0 622.2,200.5 626.2,199.5 626.9,190.3 627.9,182.9 636.9,182.3 638.9,189.4 640.8,198.4 644.9,199.0 649.1,190.7 652.8,184.3 661.4,187.2 660.5,194.6 658.8,203.6 662.4,205.7 669.4,199.7 675.3,195.2 682.1,201.1 678.4,207.6 673.4,215.3 675.9,218.6 684.7,215.7 691.9,213.8 695.9,221.8 690.0,226.4 682.5,231.6 683.5,235.6 692.7,236.3 700.1,237.3 700.7,246.3 693.6,248.3 684.6,250.2 684.0,254.3 692.3,258.5 698.7,262.2 695.8,270.8 688.4,269.9 679.4,268.2 677.3,271.8 683.3,278.8 687.8,284.7 681.9,291.5 675.4,287.8 667.7,282.8 664.4,285.3 667.3,294.1 669.2,301.3 661.2,305.3 656.6,299.4 651.4,291.9 647.4,292.9 646.7,302.1 645.7,309.5 636.7,310.1 634.7,303.0 632.8,294.0" fill="url(#gface)"/>
<polygon points="635.6,560.4 638.0,551.5 640.4,544.5 649.4,545.6 649.9,553.0 650.1,562.2 654.0,563.6 659.7,556.3 664.6,550.7 672.4,555.2 670.1,562.3 666.7,570.8 669.8,573.6 677.8,569.0 684.5,565.8 690.0,572.9 685.2,578.5 678.7,585.1 680.6,588.8 689.7,587.7 697.1,587.2 699.5,595.9 692.9,599.3 684.4,602.9 684.7,607.1 693.6,609.5 700.6,611.9 699.5,620.9 692.1,621.4 682.9,621.6 681.5,625.5 688.8,631.2 694.4,636.1 689.9,643.9 682.8,641.6 674.3,638.2 671.5,641.3 676.1,649.3 679.3,656.0 672.2,661.5 666.6,656.7 660.0,650.2 656.3,652.1 657.4,661.2 657.9,668.6 649.2,671.0 645.8,664.4 642.2,655.9 638.0,656.2 635.6,665.1 633.2,672.1 624.2,671.0 623.7,663.6 623.5,654.4 619.6,653.0 613.9,660.3 609.0,665.9 601.2,661.4 603.5,654.3 606.9,645.8 603.8,643.0 595.8,647.6 589.1,650.8 583.6,643.7 588.4,638.1 594.9,631.5 593.0,627.8 583.9,628.9 576.5,629.4 574.1,620.7 580.7,617.3 589.2,613.7 588.9,609.5 580.0,607.1 573.0,604.7 574.1,595.7 581.5,595.2 590.7,595.0 592.1,591.1 584.8,585.4 579.2,580.5 583.7,572.7 590.8,575.0 599.3,578.4 602.1,575.3 597.5,567.3 594.3,560.6 601.4,555.1 607.0,559.9 613.6,566.4 617.3,564.5 616.2,555.4 615.7,548.0 624.4,545.6 627.8,552.2 631.4,560.7" fill="url(#gface)"/>
</g>
<!-- triad -->
<path d="M304.500 664v-22" stroke="#1e9a1e" stroke-width="1.600"/><path d="M304.500 634.500l4.500 9.500h-9z" fill="#1e9a1e"/>
<path d="M304 664.500h22" stroke="#9a1414" stroke-width="1.600"/><path d="M334.500 664.500l-9.500 4.500v-9z" fill="#9a1414"/>
<circle cx="304.500" cy="664.500" r="5.500" fill="#0b0bb0"/>
<text x="304.500" y="632.500" font-family="Liberation Sans,sans-serif" font-size="10" text-anchor="middle" fill="#2fbf2f">Y</text>
<text x="337" y="668.500" font-family="Liberation Sans,sans-serif" font-size="11" fill="#d03030">X</text>
<!-- viewcube -->
<ellipse cx="971" cy="237" rx="33" ry="5" fill="url(#shad)"/>
<rect x="950.500" y="190.500" width="43" height="43" fill="#a9b6ca" fill-opacity=".74" stroke="#7f92b0" stroke-width="1"/>
<rect x="958.500" y="198" width="27.500" height="27.500" fill="#7f94b4" fill-opacity=".45"/>
<text x="955" y="217" font-family="Liberation Sans,sans-serif" font-size="11" font-weight="bold" fill="#62779a" textLength="35" lengthAdjust="spacingAndGlyphs">FRONTAL</text>
<!-- doc window controls -->
<g stroke="#26364f" stroke-width="3.600" fill="none" stroke-linecap="square"><path d="M970.500 152h9"/><path d="M1011 147l6.500 6M1017.500 147l-6.500 6"/></g>
<g stroke="#fff" stroke-width="2.200" fill="none"><path d="M969.500 152h11"/><path d="M1010.500 146.500l7.500 7M1018 146.500l-7.500 7"/></g>
<rect x="992" y="145" width="6.500" height="6" fill="none" stroke="#26364f" stroke-width="2.600"/><rect x="989.500" y="148" width="6.500" height="6" fill="none" stroke="#26364f" stroke-width="2.600"/>
<rect x="992" y="145" width="6.500" height="6" fill="none" stroke="#fff" stroke-width="1.400"/><rect x="989.500" y="148" width="6.500" height="6" fill="#26364f" stroke="#fff" stroke-width="1.400"/>
<!-- nav bar -->
<rect x="987.200" y="261.500" width="34" height="196" rx="4.500" fill="#c0c8d4" fill-opacity=".6" stroke="#3f4d64" stroke-width="1.500"/><rect x="988.500" y="262.800" width="31.400" height="193.400" rx="3.500" fill="none" stroke="#c9d3e0" stroke-opacity=".55" stroke-width=".8"/>
<circle cx="1012.700" cy="268.300" r="3.700" fill="#8a919d" stroke="#6d7480" stroke-width=".6"/><path d="M1011.100 266.700l3.200 3.200M1014.300 266.700l-3.200 3.200" stroke="#fff" stroke-width="1.200"/>
<path d="M993.500 291q0-8 8-8h13.500v11q0 11-10.800 11t-10.700-11z" fill="#d9dde4" stroke="#6a7280" stroke-width="1.200"/>
<path d="M999.800 298.500l-3.600 3.800M1008.200 298.500l3.600 3.800" stroke="#6a7280" stroke-width="1"/><circle cx="1004" cy="294" r="5.700" fill="#c4cad4" stroke="#5d6573" stroke-width="1.100"/>
<path d="M1000.500 314.500h5.500l-2.750 3.500z" fill="#4f5b6e"/>
<path d="M991.500 322h25" stroke="#5d6d86" stroke-width="1"/>
<!-- hand -->
<path d="M1000 341.500q-1.500-1.500-2.600-3.800l-1.300-2.500q-.5-1.300.6-1.600t2 1l1.100 1.500v-5.600q0-1.200 1-1.200t1 1.200v-1.800q0-1.200 1.100-1.200t1.100 1.200v1.800v-1.300q0-1.100 1-1.100t1 1.100v2.300v-1q0-1 .9-1t.9 1v6.500q0 2.800-1.600 4.500z" fill="#f6f6f6" stroke="#3a3a3a" stroke-width=".9" stroke-linejoin="round"/><path d="M1001.800 331v4M1004 330.500v4.500M1006 331.500v3.500" stroke="#3a3a3a" stroke-width=".7"/>
<!-- zoom -->
<circle cx="1002" cy="358.500" r="5.300" fill="#e6ebf2" stroke="#444" stroke-width="1.100"/><path d="M1006 362.500l5.500 5.500" stroke="#444" stroke-width="2.400" stroke-linecap="round"/><path d="M1000.500 355.500v6l1.800-1.500 2 .2z" fill="#fff" stroke="#222" stroke-width=".7"/>
<path d="M1000.500 376.500h5.500l-2.750 3.500z" fill="#4f5b6e"/>
<!-- orbit -->
<ellipse cx="1004" cy="396" rx="7" ry="3" fill="none" stroke="#444" stroke-width="1.100"/><path d="M1002.800 404v-13h-2l3.200-4 3.200 4h-2v13z" fill="#f4f4f4" stroke="#333" stroke-width=".8"/><path d="M997 396l-1.500 2.500 3.500.5" fill="none" stroke="#333" stroke-width="1"/>
<path d="M1000.500 410.500h5.500l-2.750 3.500z" fill="#4f5b6e"/>
<!-- look at -->
<rect x="997" y="425.500" width="14.500" height="10.500" fill="#dfe5ee" stroke="#444" stroke-width="1.100"/><rect x="999.500" y="429" width="9.500" height="4.500" fill="#f6f6f6" stroke="#444" stroke-width=".9"/><path d="M998 425l4-3v2l4-2.500" fill="none" stroke="#444" stroke-width="1"/>
<circle cx="1013" cy="450.500" r="3.300" fill="#e4e4e4" stroke="#555" stroke-width=".8"/><path d="M1011.300 450h3.400l-1.700 2z" fill="#444"/>
</svg>
</div>
<div class="abs" style="left:1022px;top:137px;width:2px;height:579px;background:#e6e9ee"></div>
<div class="abs" style="left:2px;top:721.500px;font-size:12px;line-height:16px;color:#000">Listo</div>
<div class="abs" style="left:952.700px;top:721.500px;font-size:11px;font-weight:bold;line-height:16px;color:#000;width:10px;text-align:center">4</div>
<div class="abs" style="left:990.700px;top:721.500px;font-size:11px;font-weight:bold;line-height:16px;color:#000;width:10px;text-align:center">4</div>
<div class="abs" style="left:984px;top:720px;width:2px;height:17px;background:#f2f2f2;border-left:1px solid #b9b9b9"></div>
<svg class="abs" style="left:0;top:728px" width="60" height="10" viewBox="0 728 60 10"><circle cx="27" cy="748.200" r="15" fill="#ccd7e6" stroke="#4a6c9e" stroke-width="1.200"/></svg>
<div class="abs" style="left:0;top:716.500px;width:251px;height:1px;background:#959595"></div>
</body>
</html>
